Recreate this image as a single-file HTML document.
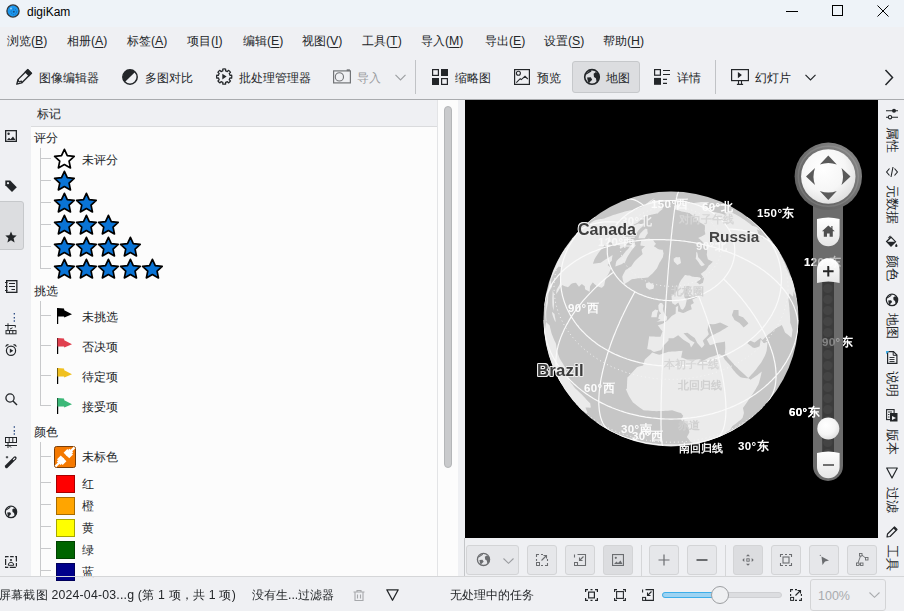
<!DOCTYPE html>
<html><head><meta charset="utf-8">
<style>
*{box-sizing:border-box;margin:0;padding:0}
html,body{width:904px;height:611px;overflow:hidden;background:#eff0f3;font-family:"Liberation Sans",sans-serif;font-size:12.3px;color:#232629}
.a{position:absolute;white-space:nowrap}
svg{position:absolute;overflow:visible}
.u{text-decoration:underline;text-underline-offset:2px;text-decoration-thickness:1px}
.mb{top:6px}
.tt{top:16px}
.btn{position:absolute;top:545px;height:30px;border:1px solid #d3d4d6;border-radius:3px;background:#e6e7ea}
.vt{position:absolute;left:885px;writing-mode:vertical-rl;text-orientation:sideways;font-size:12.5px;line-height:13px;color:#232629}
.sq{position:absolute;left:56px;width:19px;height:18px;border:1px solid rgba(0,0,0,.35)}
.br{position:absolute;left:41px;width:10px;height:1px;background:#c8c9cb}
.lbl{position:absolute;left:82px}
</style></head><body>
<svg style="left:0;top:0" width="0" height="0"><defs><symbol id="gi" viewBox="0 0 18 18"><circle cx="9" cy="8.9" r="7.3" fill="none" stroke="currentColor" stroke-width="1.6"/><path d="M1.9 6.2L7.8 2.1L8.4 3.4L3.4 6.6Z M4.1 9.6L7.8 9.2L9.2 11.7L6.9 13.9L5.8 15.8L4.6 12.2Z M10.6 5.8L12.9 4.1L15.2 5.3L16.6 8.8L15.8 12.6L13.7 14.2L12.9 10.2L11 8.9Z" fill="currentColor"/></symbol></defs></svg>
<!-- title bar -->
<div class="a" style="left:0;top:0;width:904px;height:27px;background:#eef3f8">
  <svg style="left:6px;top:4px" width="15" height="15" viewBox="0 0 15 15"><circle cx="7" cy="7" r="6.1" fill="#1c98ef" stroke="#33383d" stroke-width="1.3"/><circle cx="7.8" cy="7.8" r="2.8" fill="none" stroke="#1565b0" stroke-width="0.8" stroke-dasharray="1.2 0.8"/><circle cx="7.8" cy="7.8" r="1" fill="#1a4f88"/><circle cx="5" cy="4.6" r="1" fill="#8fd0ff"/></svg>
  <div class="a" style="left:27px;top:5px;font-size:12px;color:#000">digiKam</div>
  <svg style="left:786px;top:5px" width="12" height="12"><line x1="0" y1="6.5" x2="12" y2="6.5" stroke="#000" stroke-width="1"/></svg>
  <svg style="left:832px;top:5px" width="12" height="12"><rect x="0.5" y="0.5" width="10" height="10" fill="none" stroke="#000" stroke-width="1"/></svg>
  <svg style="left:877px;top:5px" width="12" height="12"><path d="M0.5 0.5L11.5 11.5M11.5 0.5L0.5 11.5" stroke="#000" stroke-width="1"/></svg>
</div>
<!-- menu -->
<div class="a" style="left:0;top:27px;width:904px;height:27px">
  <div class="a mb" style="left:7px">浏览(<span class="u">B</span>)</div>
  <div class="a mb" style="left:67px">相册(<span class="u">A</span>)</div>
  <div class="a mb" style="left:127px">标签(<span class="u">A</span>)</div>
  <div class="a mb" style="left:187px">项目(<span class="u">I</span>)</div>
  <div class="a mb" style="left:243px">编辑(<span class="u">E</span>)</div>
  <div class="a mb" style="left:302px">视图(<span class="u">V</span>)</div>
  <div class="a mb" style="left:362px">工具(<span class="u">T</span>)</div>
  <div class="a mb" style="left:421px">导入(<span class="u">M</span>)</div>
  <div class="a mb" style="left:485px">导出(<span class="u">E</span>)</div>
  <div class="a mb" style="left:544px">设置(<span class="u">S</span>)</div>
  <div class="a mb" style="left:603px">帮助(<span class="u">H</span>)</div>
</div>
<!-- toolbar -->
<div class="a" style="left:0;top:54px;width:904px;height:44px">
  <!-- pencil -->
  <svg style="left:15px;top:15px" width="18" height="17" viewBox="0 0 18 17"><g transform="translate(1.6 15.4) rotate(-45)"><path d="M0.3 0L4.6 -2.5H18.3V2.5H4.6Z" fill="none" stroke="#232629" stroke-width="1.4" stroke-linejoin="round"/><rect x="14.3" y="-3.2" width="4.7" height="6.4" fill="#232629"/><path d="M4.6 -2.5Q2.6 0 4.6 0.5Q6.8 1 4.6 2.5" fill="none" stroke="#232629" stroke-width="1.2"/></g></svg>
  <div class="a tt" style="left:39px">图像编辑器</div>
  <!-- half circle -->
  <svg style="left:122px;top:15px" width="17" height="17" viewBox="0 0 17 17"><circle cx="8" cy="8" r="7.2" fill="none" stroke="#232629" stroke-width="1.5"/><path d="M2.9 13.1A7.2 7.2 0 0 1 13.1 2.9Z" fill="#232629"/></svg>
  <div class="a tt" style="left:145px">多图对比</div>
  <!-- gear play -->
  <svg style="left:216px;top:14px" width="17" height="17" viewBox="0 0 17 17"><path d="M6.87 2.85L6.75 1.14A7.6 7.6 0 0 1 9.65 1.14L9.53 2.85A5.9 5.9 0 0 1 11.33 3.60L11.33 3.60L12.45 2.30A7.6 7.6 0 0 1 14.50 4.35L13.20 5.47A5.9 5.9 0 0 1 13.95 7.27L13.95 7.27L15.66 7.15A7.6 7.6 0 0 1 15.66 10.05L13.95 9.93A5.9 5.9 0 0 1 13.20 11.73L13.20 11.73L14.50 12.85A7.6 7.6 0 0 1 12.45 14.90L11.33 13.60A5.9 5.9 0 0 1 9.53 14.35L9.53 14.35L9.65 16.06A7.6 7.6 0 0 1 6.75 16.06L6.87 14.35A5.9 5.9 0 0 1 5.07 13.60L5.07 13.60L3.95 14.90A7.6 7.6 0 0 1 1.90 12.85L3.20 11.73A5.9 5.9 0 0 1 2.45 9.93L2.45 9.93L0.74 10.05A7.6 7.6 0 0 1 0.74 7.15L2.45 7.27A5.9 5.9 0 0 1 3.20 5.47L3.20 5.47L1.90 4.35A7.6 7.6 0 0 1 3.95 2.30L5.07 3.60A5.9 5.9 0 0 1 6.87 2.85Z" fill="none" stroke="#232629" stroke-width="1.25" stroke-linejoin="round"/><path d="M6.3 5.7L10.6 8.6L6.3 11.5Z" fill="#232629"/></svg>
  <div class="a tt" style="left:239px">批处理管理器</div>
  <!-- camera -->
  <svg style="left:333px;top:15px" width="18" height="15" viewBox="0 0 18 15"><rect x="0.6" y="1.9" width="16.8" height="12" fill="none" stroke="#727477" stroke-width="1.2"/><circle cx="6.4" cy="7.9" r="4.1" fill="none" stroke="#727477" stroke-width="1.1"/><rect x="13.7" y="0.3" width="3.2" height="1.8" fill="#727477"/></svg>
  <div class="a tt" style="left:357px;color:#9a9c9f">导入</div>
  <svg style="left:395px;top:20px" width="11" height="7"><path d="M0.5 0.8L5.5 5.8L10.5 0.8" fill="none" stroke="#9ea0a3" stroke-width="1.2"/></svg>
  <div class="a" style="left:415px;top:6px;width:1px;height:34px;background:#c1c3c6"></div>
  <!-- grid -->
  <svg style="left:432px;top:15px" width="16" height="16"><rect x="0.6" y="0.6" width="5.8" height="5.8" fill="none" stroke="#232629" stroke-width="1.2"/><rect x="9" y="0" width="7" height="7" fill="#232629"/><rect x="0" y="9" width="7" height="7" fill="#232629"/><rect x="9.6" y="9.6" width="5.8" height="5.8" fill="none" stroke="#232629" stroke-width="1.2"/></svg>
  <div class="a tt" style="left:455px">缩略图</div>
  <!-- preview -->
  <svg style="left:514px;top:15px" width="16" height="16"><rect x="0.6" y="0.6" width="14.8" height="14.8" fill="none" stroke="#232629" stroke-width="1.2"/><circle cx="4.4" cy="4.3" r="2" fill="none" stroke="#232629" stroke-width="1.1"/><path d="M2.3 13.6L6.2 9.7L7.3 10.6L11 7.3L13.8 10" fill="none" stroke="#232629" stroke-width="1.1"/></svg>
  <div class="a tt" style="left:537px">预览</div>
  <div class="a" style="left:572px;top:7px;width:68px;height:32px;background:#dcdde0;border:1px solid #c6c8cb;border-radius:3px"></div>
  <!-- globe -->
  <svg style="left:583px;top:14px;color:#232629" width="18" height="18"><use href="#gi"/></svg>
  <div class="a tt" style="left:606px">地图</div>
  <!-- details -->
  <svg style="left:654px;top:15px" width="17" height="17"><rect x="0.6" y="0.6" width="5.8" height="5.6" fill="none" stroke="#232629" stroke-width="1.2"/><rect x="0" y="8.9" width="7" height="6.9" fill="#232629"/><path d="M9 1.5H16M9 5.5H16M9 10.4H13M9 14.4H13" stroke="#232629" stroke-width="1.1"/></svg>
  <div class="a tt" style="left:677px">详情</div>
  <div class="a" style="left:715px;top:6px;width:1px;height:34px;background:#c1c3c6"></div>
  <!-- slideshow -->
  <svg style="left:731px;top:15px" width="18" height="16"><rect x="0.6" y="0.6" width="16.8" height="11" fill="none" stroke="#232629" stroke-width="1.2"/><path d="M6.9 3L10.9 6.1L6.9 9.2Z" fill="#232629"/><path d="M7.5 11.8V15M10.5 11.8V15M5.9 15.4H12.1" stroke="#232629" stroke-width="1.1"/></svg>
  <div class="a tt" style="left:755px">幻灯片</div>
  <svg style="left:805px;top:20px" width="11" height="7"><path d="M0.5 0.8L5.5 5.8L10.5 0.8" fill="none" stroke="#232629" stroke-width="1.2"/></svg>
  <svg style="left:884px;top:15px" width="10" height="17"><path d="M1.5 1L8.5 8.5L1.5 16" fill="none" stroke="#232629" stroke-width="1.5"/></svg>
</div>
<div class="a" style="left:0;top:99px;width:904px;height:1px;background:#a9abae"></div>

<!-- LEFT SIDEBAR -->
<div class="a" style="left:0;top:100px;width:31px;height:476px;background:#eff0f3">
</div>
<div id="lsb">
<div class="a" style="left:-3px;top:201px;width:27px;height:49px;background:#dcdde0;border:1px solid #c6c8cb;border-radius:3px"></div>
<svg style="left:5px;top:130px" width="12" height="12" viewBox="0 0 12 12"><rect x="0.65" y="0.65" width="10.7" height="10.7" fill="none" stroke="#232629" stroke-width="1.3"/><circle cx="3.6" cy="3.8" r="1.2" fill="#232629"/><path d="M2 10L4 7.8L5.5 9.2L8 6.5L10.5 10Z" fill="#232629"/></svg>
<svg style="left:5px;top:180px" width="12" height="12" viewBox="0 0 12 12"><path d="M0.3 0.6H5.2L11.8 7.2L7 12L0.3 5.3Z" fill="#232629"/><circle cx="3" cy="3.2" r="1.1" fill="#eff0f3"/></svg>
<svg style="left:5px;top:231px" width="12" height="12" viewBox="0 0 12 12"><path d="M6 0.5L7.6 4.3L11.7 4.6L8.6 7.3L9.6 11.4L6 9.2L2.4 11.4L3.4 7.3L0.3 4.6L4.4 4.3Z" fill="#232629"/></svg>
<svg style="left:5px;top:280px" width="13" height="13" viewBox="0 0 13 13"><rect x="1.65" y="0.65" width="10.2" height="11.7" fill="none" stroke="#232629" stroke-width="1.3"/><path d="M0 2.5H2.5M0 6.5H2.5M0 10.5H2.5" stroke="#232629" stroke-width="1.2"/><path d="M4 3.5H10M4 6.5H10M6.5 9.5H10" stroke="#232629" stroke-width="1.1"/></svg>
<svg style="left:0px;top:308px" width="20" height="30" viewBox="0 0 20 30"><path d="M14.3 5V6.6M14.3 9V10.6M14.3 12.2V13.8" stroke="#1c3f7a" stroke-width="1.2"/><path d="M5 17.5H15.5M8 15.3V22.3M15.3 17.5V19.5M10 21L12.5 19.8" stroke="#232629" stroke-width="1"/><rect x="6" y="22.6" width="10" height="3.2" fill="none" stroke="#232629" stroke-width="1"/><path d="M9.5 22.6V25.8M12.8 22.6V25.8" stroke="#232629" stroke-width="1"/></svg>
<svg style="left:5px;top:344px" width="13" height="12" viewBox="0 0 13 12"><circle cx="6" cy="6.8" r="4.6" fill="none" stroke="#232629" stroke-width="1.2"/><path d="M4.8 4.5L8.3 6.8L4.8 9.1Z" fill="#232629"/><path d="M0.6 2.6C1.2 1.2 2.3 0.6 3.5 0.6M11.4 2.6C10.8 1.2 9.7 0.6 8.5 0.6" fill="none" stroke="#232629" stroke-width="1.1"/></svg>
<svg style="left:5px;top:393px" width="13" height="13" viewBox="0 0 13 13"><circle cx="5" cy="5" r="4.1" fill="none" stroke="#232629" stroke-width="1.3"/><path d="M8 8L12 12" stroke="#232629" stroke-width="1.4"/></svg>
<svg style="left:0px;top:420px" width="20" height="30" viewBox="0 0 20 30"><path d="M14.3 6.2V7.8M14.3 10.1V11.7M14.3 13.2V14.8" stroke="#1c3f7a" stroke-width="1.2"/><rect x="5.5" y="17.5" width="11" height="5" fill="none" stroke="#232629" stroke-width="1"/><path d="M9.2 17.5V22.5M12.8 17.5V22.5M5 25.5H17M8 23V28M9 25.5L11 27.5" stroke="#232629" stroke-width="1"/></svg>
<svg style="left:5px;top:456px" width="13" height="12" viewBox="0 0 13 12"><path d="M1.5 10.5L10 2" stroke="#232629" stroke-width="3.2" stroke-linecap="round"/><path d="M8.2 3.8L10 2" stroke="#eff0f3" stroke-width="1.2"/><path d="M2 0V2.4M0.8 1.2H3.2" stroke="#232629" stroke-width="0.9"/></svg>
<svg style="left:4px;top:505px;color:#232629" width="14" height="14" viewBox="0 0 18 18"><use href="#gi" width="18" height="18"/></svg>
<svg style="left:5px;top:556px" width="12" height="12" viewBox="0 0 12 12"><rect x="0.6" y="0.6" width="10.8" height="10.8" fill="none" stroke="#232629" stroke-width="1.2" stroke-dasharray="3 1.5 3.6 1.5 3 0"/><circle cx="6" cy="4" r="1.1" fill="#232629"/><path d="M3.3 9.3C3.3 7.3 4.5 6.3 6 6.3C7.5 6.3 8.7 7.3 8.7 9.3Z" fill="none" stroke="#232629" stroke-width="1"/></svg>
</div>

<!-- LEFT PANEL -->
<div class="a" style="left:31px;top:100px;width:407px;height:27px;background:#eff0f3;border-bottom:1px solid #dadbdd"></div>
<div class="a" style="left:37px;top:106px">标记</div>
<div class="a" style="left:31px;top:127px;width:407px;height:449px;background:#fcfcfc"></div>
<div class="a" style="left:437px;top:100px;width:21px;height:476px;background:#fcfcfc;border-left:1px solid #e3e4e6"></div>
<div class="a" style="left:444px;top:106px;width:8px;height:362px;background:#c9cacc;border:1px solid #b4b6b8;border-radius:4px"></div>
<div class="a" style="left:458px;top:100px;width:7px;height:476px;background:#eff0f3"></div>
<div id="tree">
<svg style="left:0;top:0" width="1" height="1"><defs><path id="st" d="M-0.60 -10.70 L2.28 -4.36 L9.20 -3.58 L4.06 1.11 L5.45 7.93 L-0.60 4.50 L-6.65 7.93 L-5.26 1.11 L-10.40 -3.58 L-3.48 -4.36Z" stroke="#000" stroke-width="1.7" stroke-linejoin="round"/></defs></svg>
<div class="a" style="left:40px;top:148px;width:1px;height:121px;background:#c8c9cb"></div>
<div class="a" style="left:40px;top:301px;width:1px;height:105px;background:#c8c9cb"></div>
<div class="a" style="left:40px;top:442px;width:1px;height:134px;background:#c8c9cb"></div>
<div class="a" style="left:34px;top:130px">评分</div>
<div class="a" style="left:34px;top:283px">挑选</div>
<div class="a" style="left:34px;top:424px">颜色</div>
<div class="br" style="top:158px"></div>
<svg style="left:64.5px;top:159.9px" width="1" height="1"><use href="#st" fill="#fff"/></svg>
<div class="br" style="top:180px"></div>
<svg style="left:64.5px;top:181.9px" width="1" height="1"><use href="#st" fill="#0a74d6"/></svg>
<div class="br" style="top:202px"></div>
<svg style="left:64.5px;top:203.9px" width="1" height="1"><use href="#st" fill="#0a74d6"/></svg>
<svg style="left:86.5px;top:203.9px" width="1" height="1"><use href="#st" fill="#0a74d6"/></svg>
<div class="br" style="top:224px"></div>
<svg style="left:64.5px;top:225.9px" width="1" height="1"><use href="#st" fill="#0a74d6"/></svg>
<svg style="left:86.5px;top:225.9px" width="1" height="1"><use href="#st" fill="#0a74d6"/></svg>
<svg style="left:108.5px;top:225.9px" width="1" height="1"><use href="#st" fill="#0a74d6"/></svg>
<div class="br" style="top:246px"></div>
<svg style="left:64.5px;top:247.9px" width="1" height="1"><use href="#st" fill="#0a74d6"/></svg>
<svg style="left:86.5px;top:247.9px" width="1" height="1"><use href="#st" fill="#0a74d6"/></svg>
<svg style="left:108.5px;top:247.9px" width="1" height="1"><use href="#st" fill="#0a74d6"/></svg>
<svg style="left:130.5px;top:247.9px" width="1" height="1"><use href="#st" fill="#0a74d6"/></svg>
<div class="br" style="top:268px"></div>
<svg style="left:64.5px;top:269.9px" width="1" height="1"><use href="#st" fill="#0a74d6"/></svg>
<svg style="left:86.5px;top:269.9px" width="1" height="1"><use href="#st" fill="#0a74d6"/></svg>
<svg style="left:108.5px;top:269.9px" width="1" height="1"><use href="#st" fill="#0a74d6"/></svg>
<svg style="left:130.5px;top:269.9px" width="1" height="1"><use href="#st" fill="#0a74d6"/></svg>
<svg style="left:152.5px;top:269.9px" width="1" height="1"><use href="#st" fill="#0a74d6"/></svg>
<div class="lbl" style="top:152px">未评分</div>
<div class="br" style="top:315px"></div>
<svg style="left:56px;top:307px" width="17" height="17" viewBox="0 0 17 17"><path d="M1.6 1V17" stroke="#000" stroke-width="1.2"/><path d="M1.5 1L8 1.6L8.3 3.3L16 7.3L8.3 10.6L8 9.4L1.5 9.5Z" fill="#000"/></svg>
<div class="lbl" style="top:309px">未挑选</div>
<div class="br" style="top:345px"></div>
<svg style="left:56px;top:337px" width="17" height="17" viewBox="0 0 17 17"><path d="M1.6 1V17" stroke="#000" stroke-width="1.2"/><path d="M1.5 1L8 1.6L8.3 3.3L16 7.3L8.3 10.6L8 9.4L1.5 9.5Z" fill="#e0404f"/></svg>
<div class="lbl" style="top:339px">否决项</div>
<div class="br" style="top:375px"></div>
<svg style="left:56px;top:367px" width="17" height="17" viewBox="0 0 17 17"><path d="M1.6 1V17" stroke="#000" stroke-width="1.2"/><path d="M1.5 1L8 1.6L8.3 3.3L16 7.3L8.3 10.6L8 9.4L1.5 9.5Z" fill="#f0c020"/></svg>
<div class="lbl" style="top:369px">待定项</div>
<div class="br" style="top:405px"></div>
<svg style="left:56px;top:397px" width="17" height="17" viewBox="0 0 17 17"><path d="M1.6 1V17" stroke="#000" stroke-width="1.2"/><path d="M1.5 1L8 1.6L8.3 3.3L16 7.3L8.3 10.6L8 9.4L1.5 9.5Z" fill="#3cb878"/></svg>
<div class="lbl" style="top:399px">接受项</div>
<div class="br" style="top:456px"></div>
<svg style="left:54px;top:446px" width="22" height="22" viewBox="0 0 22 22"><rect x="0.5" y="0.5" width="21" height="21" rx="2" fill="#f57900" stroke="#7a3e08" stroke-width="1"/><g transform="translate(11 10.9) rotate(-45)" fill="#fff"><rect x="-13.5" y="-1.1" width="11.5" height="2.2"/><rect x="2" y="-1.1" width="11.5" height="2.2"/><rect x="-7.3" y="-4" width="5.3" height="8"/><rect x="2" y="-4" width="5.3" height="8"/><rect x="-9" y="-2.6" width="2" height="5.2"/><rect x="7" y="-2.6" width="2" height="5.2"/></g></svg>
<div class="lbl" style="top:449px">未标色</div>
<div class="br" style="top:482px"></div>
<div class="sq" style="top:474.5px;background:#ff0000"></div>
<div class="lbl" style="top:476px">红</div>
<div class="br" style="top:504px"></div>
<div class="sq" style="top:496.5px;background:#ffa500"></div>
<div class="lbl" style="top:498px">橙</div>
<div class="br" style="top:526px"></div>
<div class="sq" style="top:518.5px;background:#ffff00"></div>
<div class="lbl" style="top:520px">黄</div>
<div class="br" style="top:548px"></div>
<div class="sq" style="top:540.5px;background:#006400"></div>
<div class="lbl" style="top:542px">绿</div>
<div class="br" style="top:570px"></div>
<div class="sq" style="top:562.5px;background:#00008b"></div>
<div class="lbl" style="top:564px">蓝</div>
</div>

<!-- MAP -->
<div class="a" style="left:465px;top:100px;width:413px;height:438px;background:#000;overflow:hidden">
<div id="globe"><svg style="left:0;top:0" width="413" height="439"><defs><clipPath id="gc"><circle cx="206" cy="219" r="127.5"/></clipPath></defs><circle cx="206" cy="219" r="127.5" fill="#c6c6c6"/><g clip-path="url(#gc)"><path d="M192.3 97.2L191.2 97.7L190.1 98.2L189.0 98.6L188.0 99.1L187.0 99.7L186.1 100.2L185.1 100.8L184.3 101.4L183.4 102.0L182.7 102.7L181.9 103.3L181.2 104.0L180.6 104.7L179.7 105.2L178.9 105.7L178.1 106.2L177.3 106.7L176.5 107.3L175.4 107.6L174.3 107.9L173.3 108.3L172.2 108.6L171.1 109.0L170.0 109.4L169.0 109.8L167.4 110.0L165.8 110.3L164.2 110.6L162.5 110.9L160.9 111.3L159.2 111.7L157.6 112.2L155.9 112.7L154.2 113.2L152.5 113.8L150.3 114.4L148.1 115.1L145.9 115.9L143.7 116.7L141.5 117.6L139.2 118.6L137.9 118.7L136.7 118.9L135.4 119.1L134.2 119.3L133.0 119.6L131.8 119.8L130.7 120.1L129.6 120.5L127.7 121.6L125.9 122.7L124.1 123.9L122.4 125.2L120.6 126.5L118.9 127.8L117.0 129.5L115.2 131.3L113.4 133.1L111.6 134.9L109.9 136.8L108.3 138.5L106.7 140.3L105.1 142.2L103.6 144.0L102.1 146.0L100.6 147.9L99.2 149.9L97.9 152.0L96.6 154.1L95.4 156.2L94.2 158.4L93.1 160.6L92.0 162.7L91.0 164.8L90.1 167.0L89.2 169.2L88.3 171.3L87.4 173.6L86.6 175.8L85.9 178.0L85.4 179.9L84.9 181.8L84.4 183.8L84.0 185.7L83.6 187.6L83.2 189.8L82.8 192.0L82.4 194.2L82.1 196.4L81.8 198.7L81.3 201.7L80.8 204.8L80.5 207.9L80.2 210.9L80.2 212.9L80.3 214.9L80.4 216.9L80.6 218.9L80.8 220.9L81.5 221.2L81.3 218.8L81.2 216.4L81.2 214.0L81.2 211.6L81.6 209.4L82.0 207.2L82.5 205.0L83.0 202.8L83.0 200.8L83.1 198.9L83.2 196.9L83.4 195.0L83.6 193.0L84.2 191.7L84.9 190.4L85.6 189.1L86.3 187.9L87.1 186.6L87.2 185.0L87.3 183.4L86.6 183.8L86.0 184.2L86.0 182.9L86.1 181.5L86.2 180.2L86.4 178.9L87.3 176.8L88.2 174.8L89.2 172.9L90.2 170.9L91.0 169.8L91.9 168.6L92.8 167.5L93.7 166.4L94.5 166.7L95.3 167.0L96.2 167.2L96.1 168.6L96.0 170.0L95.9 171.4L95.8 172.8L95.8 174.2L95.7 175.7L95.6 177.2L95.6 178.7L95.6 180.2L95.1 182.4L94.6 184.5L93.6 186.3L92.6 188.0L91.6 189.8L91.3 192.1L91.0 194.3L91.9 193.0L92.9 191.7L93.9 190.0L94.9 188.3L96.0 186.7L97.0 185.0L98.1 185.5L99.3 186.0L100.5 186.4L101.7 186.8L103.0 187.2L104.3 185.9L105.6 184.6L106.9 183.4L108.9 183.1L111.0 182.8L111.7 183.8L112.4 184.8L113.2 185.7L114.0 186.7L115.4 185.3L116.9 184.0L117.8 184.8L118.8 185.5L119.8 186.3L119.9 187.8L120.1 189.3L121.2 189.9L122.3 190.6L123.5 191.2L124.7 191.7L124.8 189.9L124.9 188.0L125.1 186.2L126.4 184.3L127.6 182.4L128.5 183.1L129.3 183.9L130.2 184.7L131.1 185.4L132.0 186.2L133.2 186.6L134.4 187.0L135.7 187.4L136.9 187.8L139.2 185.5L139.5 183.7L139.9 181.9L140.3 180.1L140.8 178.3L142.4 175.7L144.0 173.1L144.7 171.4L145.5 169.7L146.3 168.1L145.5 167.5L144.8 166.9L144.1 166.3L143.4 165.7L142.7 165.0L144.7 162.8L146.8 160.7L146.9 159.7L147.0 158.8L147.1 157.8L147.3 156.8L147.4 155.9L147.6 154.9L145.3 156.4L143.0 158.0L141.1 159.1L139.3 160.3L137.5 161.5L135.7 162.7L133.7 163.0L131.8 163.3L129.9 163.5L128.0 163.7L128.4 162.3L128.9 160.9L129.4 159.6L130.2 158.1L131.1 156.6L132.0 155.2L132.9 153.8L133.8 152.4L134.9 151.0L135.9 149.7L137.1 148.4L138.2 147.1L139.3 145.8L140.5 144.6L142.8 143.2L145.0 141.9L146.0 142.5L147.0 143.0L148.1 143.5L149.2 144.0L150.3 144.5L151.9 144.9L153.5 145.2L155.2 145.5L155.2 146.2L155.2 146.9L155.2 147.6L155.2 148.3L155.3 149.0L157.3 147.7L159.3 146.4L161.4 145.3L161.1 144.7L160.9 144.2L160.8 143.6L160.6 143.0L160.4 142.4L161.3 141.7L162.3 140.9L163.2 140.2L164.1 139.6L165.1 138.9L163.9 138.4L162.9 138.0L161.8 137.4L160.8 136.9L159.8 136.3L160.0 135.7L160.2 135.1L160.4 134.5L160.7 133.8L161.0 133.2L161.3 132.6L161.6 132.0L161.9 131.4L162.2 130.8L162.5 130.2L162.9 129.6L163.3 129.0L163.6 128.4L164.0 127.8L164.4 127.3L165.2 126.8L166.0 126.3L166.8 125.8L167.6 125.4L168.3 124.9L169.1 124.5L169.9 124.1L170.7 123.7L171.5 123.3L172.4 123.0L172.8 122.5L173.3 122.1L173.8 121.6L174.4 121.2L174.9 120.8L175.4 120.3L175.8 119.8L176.3 119.4L176.8 119.0L177.3 118.5L177.9 118.1L178.4 117.7L178.9 117.3L179.5 116.9L180.1 116.5L180.8 116.2L181.6 115.9L182.3 115.7L183.1 115.5L183.9 115.3L184.6 115.1L185.4 114.9L186.2 114.7L186.9 114.5L187.7 114.4L188.4 114.2L189.1 114.0L189.9 113.9L190.6 113.7L191.4 113.6L192.1 113.5L192.8 113.4L193.3 112.8L193.8 112.3L194.3 111.8L194.9 111.2L195.5 110.7L196.1 110.2L196.8 109.7L197.4 109.2L198.1 108.8L197.1 108.3L196.1 107.9L195.0 107.6L193.9 107.2L194.7 107.0L195.6 106.7L196.4 106.5L197.3 106.3L198.2 106.1L197.1 105.8L196.1 105.5L195.0 105.3L193.9 105.1L192.7 104.9L193.5 104.2L194.3 103.6L195.1 103.0L194.7 102.1L194.3 101.1L193.9 100.2L192.7 100.4L191.6 100.6L190.4 100.8L189.3 101.0L188.2 101.2L187.1 101.5L186.0 101.8L186.7 101.0L187.4 100.2L188.3 99.5L189.1 98.8L190.2 98.2L191.2 97.7ZM150.3 166.4L150.5 165.3L150.7 164.2L150.9 163.1L151.2 162.0L151.5 161.0L153.4 159.0L155.5 157.2L157.6 155.4L158.4 154.3L159.2 153.2L160.1 152.2L160.9 151.1L161.8 150.2L162.8 149.2L163.4 148.4L164.1 147.6L164.7 146.8L165.4 146.1L166.1 145.3L166.8 144.6L167.6 143.9L168.3 143.3L169.1 142.6L169.8 142.0L169.9 142.5L169.9 143.0L170.0 143.4L170.1 143.9L170.2 144.4L170.3 144.9L170.5 145.3L170.6 145.8L169.9 146.5L169.3 147.2L168.6 147.9L168.0 148.7L167.4 149.4L166.8 150.2L166.2 151.1L165.6 151.9L165.0 152.8L164.4 153.7L163.8 154.7L163.2 155.6L162.7 156.6L162.1 157.6L161.6 158.6L161.2 159.7L160.7 160.8L160.3 161.8L158.4 163.0L156.6 164.2L154.5 165.0L152.4 165.7ZM176.3 140.3L176.2 140.7L176.1 141.2L176.0 141.6L175.9 142.0L175.8 142.4L175.7 142.9L175.6 143.3L175.6 143.7L175.5 144.2L175.5 144.6L175.4 145.0L175.4 145.5L176.4 145.7L177.4 145.8L178.3 146.0L179.3 146.1L180.3 146.2L181.3 146.2L182.0 146.3L182.8 146.5L183.5 146.6L184.3 146.6L185.0 146.7L185.7 146.7L186.5 146.8L187.2 146.8L188.0 146.8L188.7 146.7L189.0 146.3L189.2 146.0L189.5 145.6L189.8 145.2L190.1 144.8L190.4 144.5L190.7 144.2L191.0 143.8L190.8 143.7L190.7 143.5L190.5 143.3L190.3 143.1L190.1 142.9L189.9 142.7L189.8 142.5L189.6 142.3L189.5 142.1L189.3 141.9L189.2 141.7L189.0 141.5L188.9 141.3L188.8 141.1L188.6 140.8L188.5 140.6L188.4 140.4L188.3 140.1L187.6 139.9L186.8 139.7L186.1 139.5L185.5 139.2L184.8 138.9L184.1 138.6L182.2 138.9L180.2 139.3L178.3 139.8ZM174.0 123.6L173.0 123.8L172.1 124.1L171.2 124.5L170.3 124.8L169.3 125.2L168.4 125.6L167.5 126.0L167.0 126.5L166.6 127.0L166.2 127.6L165.8 128.1L165.5 128.7L165.1 129.2L164.8 129.8L164.4 130.4L164.1 130.9L163.8 131.5L163.5 132.1L163.2 132.7L162.9 133.3L162.7 133.8L162.4 134.4L162.2 135.0L162.0 135.6L164.0 135.6L166.0 135.6L168.0 135.6L170.1 135.6L170.3 135.1L170.6 134.6L170.9 134.2L171.1 133.7L171.4 133.2L171.7 132.8L172.1 132.3L172.4 131.8L172.7 131.4L173.0 131.0L173.4 130.5L173.7 130.1L174.1 129.7L174.5 129.2L174.9 128.8L175.3 128.4L175.7 128.0L176.2 127.7L176.6 127.3L177.0 126.9L177.5 126.5L177.9 126.2L178.4 125.8L178.9 125.5L177.2 124.8L175.6 124.2ZM180.6 128.6L180.2 128.9L179.7 129.2L179.3 129.6L178.9 129.9L178.5 130.2L178.1 130.6L177.7 130.9L177.4 131.3L177.0 131.7L176.6 132.0L176.3 132.4L175.9 132.8L175.6 133.2L175.2 133.6L174.9 134.0L174.7 134.5L174.5 134.9L174.4 135.3L174.2 135.8L174.1 136.2L173.9 136.6L173.8 137.1L173.7 137.5L173.6 138.0L173.5 138.4L175.6 138.3L177.7 138.3L179.9 138.3L180.0 137.9L180.2 137.6L180.3 137.2L180.5 136.9L180.7 136.5L180.9 136.2L181.1 135.8L181.3 135.5L181.5 135.2L181.7 134.9L181.9 134.5L182.1 134.2L182.4 133.9L182.6 133.6L182.9 133.3L182.8 132.9L182.7 132.5L182.6 132.1L182.5 131.7L182.5 131.3L182.4 130.9L182.4 130.5L182.4 130.1L182.4 129.7L182.4 129.3ZM180.1 146.2L179.4 146.8L178.7 147.5L177.9 148.2L177.3 148.9L176.6 149.6L176.6 150.0L176.7 150.5L176.8 150.9L176.9 151.4L177.0 151.8L177.1 152.3L177.2 152.7L177.4 153.2L177.5 153.6L177.7 154.1L175.7 155.7L173.9 157.3L172.0 159.0L170.2 160.8L168.8 162.6L167.5 164.5L166.2 166.4L164.3 167.6L162.4 168.9L160.6 170.1L159.4 172.2L158.3 174.3L157.3 176.5L157.4 177.6L157.6 178.7L157.8 179.9L158.1 181.0L158.4 182.1L158.7 183.2L159.0 184.4L161.0 183.1L162.9 181.9L164.9 180.6L166.8 179.3L168.1 179.1L169.3 178.9L170.6 178.7L171.8 178.5L173.0 178.2L174.0 178.2L175.1 178.2L176.1 178.1L177.1 178.1L178.1 178.0L179.1 177.9L180.1 177.8L181.0 177.7L182.0 177.6L183.0 177.4L184.5 176.1L186.0 174.8L187.5 173.4L189.0 171.8L190.5 170.1L192.0 168.3L192.8 166.4L193.7 164.5L194.6 162.6L195.7 160.9L196.8 159.1L197.9 157.3L198.1 156.0L198.3 154.7L198.6 153.4L198.5 153.1L198.4 152.7L198.3 152.3L198.2 152.0L198.1 151.6L198.0 151.2L197.9 150.9L197.9 150.5L197.9 150.2L197.8 149.8L197.5 149.8L197.2 149.8L196.9 149.8L196.6 149.8L196.4 149.7L196.1 149.7L195.8 149.7L195.5 149.6L195.2 149.6L194.9 149.5L194.5 149.4L194.2 149.4L193.9 149.3L193.6 149.2L193.3 149.1L193.1 149.0L192.9 148.9L192.6 148.7L192.4 148.6L192.2 148.4L191.9 148.3L191.7 148.1L191.5 148.0L191.2 147.8L191.0 147.6L190.8 147.5L190.6 147.3L190.4 147.1L190.2 146.9L190.0 146.7L189.5 146.7L189.0 146.6L188.5 146.6L188.0 146.5L187.4 146.4L186.9 146.3L186.4 146.2L185.9 146.0L184.8 146.1L183.6 146.2L182.4 146.2L181.3 146.2ZM180.8 183.6L180.9 185.4L181.1 187.2L181.8 187.9L182.6 188.5L183.4 189.1L184.2 189.7L185.3 189.5L186.4 189.2L187.5 188.9L188.6 188.5L189.1 185.3L188.2 184.5L187.4 183.7L186.5 183.4L185.7 183.2L184.9 183.0L184.0 182.7L183.2 182.4L182.0 183.0ZM81.3 221.9L81.9 222.7L82.5 223.4L83.2 224.1L83.9 224.8L84.7 225.4L85.1 227.4L85.6 229.4L86.1 231.5L86.6 233.5L87.3 235.2L88.0 237.0L88.7 238.7L89.4 240.4L90.2 242.1L91.0 243.8L91.5 247.3L92.0 250.7L92.8 253.2L93.7 255.7L94.6 258.2L95.6 260.0L96.7 261.8L97.8 263.6L98.9 265.4L100.1 267.1L100.7 269.8L101.5 272.4L102.2 275.0L103.5 278.2L104.9 281.3L106.2 283.2L107.7 285.0L109.1 286.9L110.6 288.7L112.1 290.1L113.6 291.6L115.2 293.0L116.8 294.4L118.4 296.3L120.1 298.1L121.8 299.9L123.5 301.7L125.3 303.4L125.4 304.9L125.7 306.3L125.9 307.6L124.5 307.7L123.1 307.6L121.7 307.6L120.5 307.5L120.8 308.5L121.2 309.6L121.6 310.5L122.1 311.5L122.5 312.4L122.3 312.8L122.0 313.1L121.8 313.4L121.7 313.6L120.5 312.8L119.3 311.9L118.2 311.0L117.1 310.1L116.4 309.6L115.7 309.0L115.1 308.4L115.4 308.8L115.8 309.1L116.2 309.5L115.8 309.1L115.4 308.8L115.1 308.4L114.8 308.1L114.0 307.3L113.3 306.5L112.5 305.7L111.8 304.9L111.1 304.2L112.3 305.5L113.6 306.8L114.8 308.1L113.9 307.2L113.1 306.3L112.3 305.5L111.5 304.6L110.7 303.7L110.7 303.7L110.7 303.7L110.7 303.7L111.7 304.8L112.7 305.9L113.8 307.1L114.9 308.2L115.3 308.6L115.8 309.1L116.3 309.6L116.8 310.1L117.6 310.9L118.5 311.7L117.7 310.9L116.8 310.1L116.0 309.3L115.2 308.5L114.4 307.7L113.7 306.9L112.5 305.7L111.4 304.5L110.3 303.3L109.3 302.1L108.3 300.9L107.3 299.7L106.4 298.6L105.5 297.4L104.6 296.3L103.8 295.2L102.8 293.9L101.9 292.6L101.0 291.3L100.1 290.0L99.2 288.7L98.6 287.7L98.0 286.8L97.4 285.9L96.9 285.0L96.4 284.1L95.8 283.2L95.4 282.4L94.7 281.2L94.1 280.2L93.5 279.1L93.0 278.0L92.4 276.9L91.8 275.8L91.3 274.7L90.8 273.6L90.3 272.6L89.8 271.5L89.0 269.7L88.3 268.0L87.6 266.2L86.7 263.9L85.8 261.5L85.0 259.1L84.2 256.7L83.5 254.3L82.9 252.1L82.3 250.0L81.8 247.8L81.3 245.6L80.9 243.4L80.5 241.2L80.0 238.7L79.7 236.2L79.4 233.7L79.2 232.8L79.2 231.8L79.1 230.9L79.1 230.0L79.2 229.1L79.4 228.3L79.7 228.3L80.2 228.2L80.4 226.8L80.6 225.4L80.8 224.0ZM182.2 249.1L182.5 247.0L182.9 244.9L183.2 242.7L183.5 240.6L183.9 238.4L184.2 236.3L185.8 236.4L187.5 236.5L189.1 236.6L190.7 236.7L192.3 236.7L193.9 236.7L195.5 236.7L196.5 234.0L197.5 231.3L195.9 229.4L194.3 227.3L192.8 225.3L194.6 224.8L196.3 224.2L198.1 223.6L199.6 222.6L201.0 221.6L202.5 220.5L203.9 219.1L205.3 217.6L206.7 216.1L208.0 215.3L209.3 214.6L210.6 213.8L210.7 211.5L210.8 209.3L210.8 207.1L212.0 206.5L213.2 205.8L213.1 208.6L213.0 211.4L214.3 211.8L215.7 212.3L217.0 212.7L218.4 213.1L219.6 212.5L220.8 211.9L222.0 211.3L223.2 210.7L224.4 210.3L225.6 209.8L226.8 209.3L226.2 207.1L225.7 205.0L226.8 204.3L227.8 203.7L228.9 203.0L227.2 199.4L228.4 198.9L229.5 198.5L230.7 198.0L231.8 197.5L232.6 196.6L233.4 195.7L232.4 195.9L231.3 196.0L230.2 196.2L229.1 196.3L228.0 196.4L226.7 196.4L225.4 196.3L224.1 196.3L223.3 194.2L222.4 192.1L223.0 190.6L223.6 189.0L224.1 187.5L224.5 186.0L223.6 186.0L222.6 186.0L221.7 186.0L221.2 187.7L220.7 189.4L220.1 191.1L219.5 192.8L219.5 195.0L219.4 197.2L221.7 200.2L221.1 203.1L220.4 206.0L219.2 207.9L217.9 209.8L215.9 208.9L215.1 206.8L214.2 204.6L213.4 202.5L212.4 203.3L211.3 204.1L210.1 204.9L208.6 204.1L207.2 203.2L206.9 200.9L206.7 198.5L206.5 196.2L207.5 195.3L208.5 194.4L209.5 193.5L210.4 192.6L211.4 191.6L212.1 189.7L212.8 187.7L213.5 185.7L214.1 183.8L214.7 182.6L215.3 181.4L215.9 180.2L216.5 179.5L217.1 178.8L217.7 178.0L218.3 177.3L218.8 176.5L219.4 175.8L219.9 175.0L220.7 175.1L221.5 175.3L222.3 175.4L223.1 175.5L223.9 175.6L224.8 175.6L225.8 176.0L226.8 176.4L227.8 176.7L228.7 176.8L229.6 176.9L230.6 177.0L231.5 177.1L232.4 177.1L233.4 177.2L234.3 177.2L236.2 178.6L235.6 179.1L235.0 179.7L234.3 180.2L233.6 180.7L232.9 181.2L232.2 181.7L231.5 182.2L233.1 183.3L234.7 184.4L235.5 184.0L236.3 183.6L237.1 183.2L237.9 182.7L238.2 181.6L238.5 180.5L238.8 179.3L239.0 178.2L237.4 176.0L235.7 173.8L236.3 173.4L237.0 172.9L237.6 172.5L238.2 172.1L238.8 171.6L239.3 171.2L239.9 170.7L240.5 170.3L241.0 169.8L241.4 169.2L241.8 168.6L242.2 168.0L242.6 167.4L243.0 166.8L243.3 166.2L243.7 165.5L244.2 165.1L244.8 164.7L245.3 164.2L245.8 163.8L246.3 163.3L246.8 162.8L247.3 162.3L247.8 161.8L245.3 160.6L242.8 159.3L242.7 158.5L242.5 157.7L242.3 156.9L242.1 156.2L241.9 155.4L241.7 154.7L241.8 154.1L241.9 153.5L241.9 153.0L242.0 152.4L242.0 151.9L242.1 151.3L242.1 150.8L242.0 150.1L241.8 149.5L241.6 148.9L241.5 148.4L241.3 147.8L241.1 147.2L240.8 146.6L240.5 146.1L240.2 145.5L239.8 144.9L239.4 144.4L239.1 143.8L238.7 143.3L238.3 142.8L237.8 142.3L237.4 141.8L237.0 141.3L236.5 140.8L236.1 140.4L235.6 139.9L235.1 139.5L234.7 139.1L234.2 138.7L233.6 138.3L233.1 137.9L234.1 137.5L235.1 137.1L236.0 136.7L236.9 136.2L237.8 135.8L238.7 135.3L239.5 134.7L240.3 134.2L240.3 133.7L240.2 133.3L240.1 132.8L240.0 132.3L239.9 131.8L239.8 131.3L239.6 130.8L239.7 130.3L239.8 129.8L239.9 129.2L239.9 128.7L239.9 128.2L240.0 127.6L239.9 127.0L239.9 126.5L239.9 125.9L239.8 125.4L239.2 125.0L238.6 124.6L238.0 124.2L237.4 123.8L236.8 123.4L236.1 123.1L235.5 122.7L234.9 122.4L234.3 122.1L233.6 121.8L233.3 121.3L232.9 120.9L232.5 120.4L232.1 120.0L231.7 119.6L231.3 119.1L230.9 118.7L230.4 118.3L230.0 117.9L229.5 117.4L229.1 117.0L228.6 116.5L228.2 116.1L227.7 115.6L227.2 115.2L226.7 114.8L226.2 114.3L225.6 113.9L225.1 113.5L224.5 113.1L223.8 112.9L223.0 112.7L222.3 112.5L221.5 112.4L220.7 112.2L220.0 112.1L219.2 111.9L218.4 111.8L217.7 111.7L216.9 111.6L216.2 111.4L215.5 111.1L214.8 110.9L214.1 110.6L213.4 110.4L212.6 110.2L211.9 110.0L211.1 109.8L210.4 109.6L209.6 109.5L209.7 108.4L209.9 107.3L210.1 106.2L210.2 105.2L211.3 104.7L212.4 104.2L213.5 103.7L214.7 103.3L215.9 102.9L217.0 102.9L218.1 102.9L219.2 102.9L220.3 102.9L221.5 102.9L222.6 103.0L223.8 103.1L224.9 103.2L226.1 103.3L227.3 103.4L229.0 103.0L230.8 102.7L232.6 102.4L234.4 102.2L236.3 102.0L238.3 102.0L240.2 102.0L242.2 102.1L244.3 102.3L243.6 102.7L242.9 103.1L242.3 103.6L241.5 104.1L240.8 104.7L240.0 105.2L239.3 105.8L240.1 106.4L241.0 106.9L241.8 107.5L242.7 108.1L243.5 108.7L244.2 109.3L245.0 109.9L245.7 110.5L246.5 111.1L247.2 111.7L248.9 112.0L250.6 112.3L252.4 112.7L254.1 113.1L255.9 113.6L257.7 114.1L259.5 114.7L261.3 115.3L261.0 114.5L260.7 113.7L260.4 112.9L260.0 112.0L261.4 112.1L262.8 112.1L264.2 112.2L265.6 112.4L266.9 112.5L268.7 113.4L270.4 114.3L272.1 115.3L273.9 116.3L275.6 117.3L277.3 118.4L279.0 119.6L280.7 120.7L282.4 122.0L284.1 123.2L285.8 124.5L287.4 125.9L288.4 126.1L289.4 126.4L290.3 126.6L291.2 126.9L292.1 127.3L293.1 128.4L294.1 129.6L295.1 130.8L293.9 130.3L292.8 129.7L291.7 129.2L292.1 130.1L292.5 131.1L292.8 132.1L293.1 133.0L293.4 134.0L295.0 135.6L296.6 137.2L298.1 138.9L297.7 137.8L297.3 136.7L296.8 135.6L296.3 134.5L298.0 136.0L299.7 137.5L301.4 139.1L302.1 139.2L302.8 139.3L303.4 139.4L303.9 139.5L305.3 140.8L306.6 142.2L307.8 143.6L309.1 145.1L310.3 146.6L311.7 148.6L313.1 150.7L314.4 152.9L315.4 154.7L316.4 156.5L317.3 158.3L318.2 160.1L319.1 162.0L319.9 163.8L320.7 165.7L321.0 167.0L321.4 168.3L322.6 170.7L323.7 173.1L324.8 175.6L325.3 176.0L325.7 176.4L326.0 176.8L326.3 177.2L326.5 177.6L326.7 178.1L327.6 180.7L328.4 183.3L329.1 186.0L329.8 188.6L329.8 189.0L329.8 189.4L329.6 189.8L329.4 190.2L330.1 192.6L330.6 195.1L331.2 197.5L331.4 197.9L331.7 198.2L331.8 198.6L331.9 199.0L332.0 199.3L332.0 199.7L332.1 200.0L332.1 200.4L332.3 201.7L332.5 202.9L332.6 204.2L332.6 203.8L332.5 203.3L332.4 202.9L332.3 202.4L332.0 202.0L331.7 200.6L331.3 199.3L330.9 197.9L330.5 196.6L330.0 195.3L329.5 194.0L328.9 192.6L328.3 191.3L328.3 192.7L328.2 194.0L328.1 195.4L327.9 196.7L327.2 196.1L326.5 195.4L325.8 194.8L325.0 194.1L324.1 193.4L324.0 195.1L323.9 196.7L323.7 198.3L323.5 199.9L323.8 202.5L324.1 205.2L324.4 207.8L324.5 210.5L324.8 213.6L325.0 216.6L325.2 219.7L325.2 222.7L325.8 224.2L326.3 225.6L326.7 227.1L327.2 228.5L327.6 230.0L327.2 232.6L326.9 235.2L326.4 237.8L325.8 237.2L325.1 236.5L324.3 235.9L323.6 235.2L322.7 234.6L321.9 233.9L321.0 233.2L320.0 232.5L319.4 231.0L318.8 229.5L318.2 227.9L317.5 226.4L316.7 224.9L315.6 225.7L314.4 226.4L313.2 227.1L311.9 227.8L310.6 228.4L309.5 229.5L308.4 230.5L307.2 231.5L306.0 232.4L304.7 233.4L303.5 234.3L302.3 235.5L301.1 236.6L299.8 237.8L298.6 238.9L297.3 240.0L295.5 238.0L294.0 239.2L292.5 240.3L291.0 241.4L289.4 242.5L287.1 241.4L284.8 240.2L283.6 241.7L282.4 243.3L284.2 244.7L286.0 246.1L287.7 247.4L289.8 248.0L291.4 247.5L293.0 246.9L294.6 246.2L295.2 242.8L295.7 239.3L297.3 241.3L298.8 243.4L300.6 242.6L302.5 241.8L302.3 244.8L302.0 247.8L301.6 250.9L300.8 253.4L299.8 255.9L298.7 258.0L297.6 260.1L296.4 262.2L295.1 264.0L293.7 265.8L292.4 267.6L291.0 269.4L289.5 271.2L288.0 272.9L286.5 274.6L285.0 276.3L283.4 278.0L282.1 276.9L280.8 275.7L279.5 274.5L278.1 273.3L276.7 272.1L275.3 270.8L273.9 269.5L272.6 268.1L271.2 266.8L269.9 265.4L268.6 264.0L267.2 262.5L265.9 261.0L264.5 259.5L263.1 258.0L262.0 256.4L260.9 254.7L259.8 252.9L260.1 250.6L260.3 248.3L260.2 246.0L260.1 243.8L259.9 241.6L258.2 241.9L256.5 242.2L254.8 242.5L253.1 242.7L251.4 243.0L249.8 243.6L248.2 244.2L246.6 244.7L245.0 245.3L243.9 243.4L242.9 241.5L241.8 239.5L243.2 238.3L244.6 237.1L245.9 235.9L247.4 235.2L248.9 234.6L250.3 233.9L251.8 233.1L253.2 232.4L254.6 231.7L256.0 230.9L257.4 230.1L258.8 229.3L260.1 228.5L261.5 227.6L263.5 226.5L261.4 225.5L259.3 224.6L257.2 223.5L255.1 222.5L253.5 223.0L251.9 223.4L250.3 223.9L248.6 224.3L247.0 224.2L245.4 224.0L243.8 223.8L243.2 227.0L242.6 230.1L243.2 232.2L243.8 234.3L242.4 235.9L240.9 237.5L239.4 239.1L237.8 240.7L238.7 242.7L239.5 244.7L238.1 246.4L236.7 248.1L234.5 245.6L232.3 243.1L231.0 240.6L229.7 238.1L227.9 236.8L226.0 235.5L224.2 234.1L222.4 232.7L220.5 233.0L218.5 233.2L220.7 235.5L222.8 237.8L225.0 240.1L227.3 241.3L229.6 242.6L227.9 245.1L226.0 247.6L225.3 245.5L224.6 243.4L222.5 242.3L220.4 241.1L218.4 239.8L216.6 238.3L214.9 236.8L213.2 235.2L211.6 236.2L210.0 237.3L208.4 238.3L206.8 238.3L205.2 238.3L203.6 238.3L203.5 240.5L201.8 242.2L200.1 244.0L198.3 245.7L197.3 247.8L196.3 249.9L194.5 250.5L192.7 251.0L190.9 251.5L189.0 252.0L187.3 250.9L185.7 249.7L184.0 249.5ZM191.5 221.8L193.0 221.6L194.5 221.5L195.9 221.3L197.4 221.2L198.9 220.9L200.3 220.7L201.8 220.5L202.2 216.7L200.0 214.8L198.4 211.3L197.9 209.1L198.5 205.6L197.3 203.2L196.2 203.1L195.0 203.0L193.3 205.2L193.5 208.6L194.1 211.3L196.2 213.4L194.1 214.7L193.7 217.6L192.7 218.1L194.1 218.9L195.6 219.6L193.5 220.7ZM186.2 217.2L187.6 217.3L188.9 217.3L190.3 217.3L191.7 217.3L192.0 215.1L192.3 212.9L193.4 210.3L191.8 210.0L190.3 209.6L188.8 210.8L187.2 212.0L186.7 214.6ZM208.9 161.4L209.4 162.0L210.0 162.6L210.6 163.2L211.2 163.8L211.8 164.4L212.4 165.0L212.9 164.8L213.4 164.5L213.8 164.3L214.3 164.1L214.7 163.8L215.2 163.6L215.6 163.3L216.0 163.1L215.7 161.1L215.3 159.1L214.8 157.1L214.4 157.1L214.0 157.2L213.6 157.2L213.2 157.2L212.9 157.2L212.5 157.2L212.1 157.2L211.7 157.2L211.3 157.1L210.9 157.1L210.6 157.4L210.3 157.6L210.0 157.9L209.6 158.1L209.3 158.4L208.9 158.6L208.6 158.8ZM236.6 166.3L237.2 166.0L237.9 165.7L238.5 165.5L239.1 165.2L239.8 164.8L238.2 162.9L236.6 161.0L234.9 159.1L233.2 157.3L233.1 156.7L233.0 156.0L232.9 155.4L232.8 154.7L232.6 154.1L232.5 153.5L232.3 152.9L232.1 152.3L231.9 151.7L231.7 152.0L231.4 152.4L231.2 152.7L231.2 153.2L231.2 153.7L231.2 154.3L231.2 154.8L231.1 155.3L231.1 155.8L231.0 156.3L231.0 156.8L230.9 157.4L230.8 157.9L230.6 158.4L232.2 160.5L233.7 162.6L235.0 164.7ZM162.4 277.6L162.3 279.5L162.1 281.4L162.1 283.3L162.0 285.1L161.9 287.0L161.9 288.8L160.8 289.0L161.9 291.5L163.0 294.0L164.2 296.5L165.5 298.5L166.7 300.5L168.0 302.5L170.1 304.1L172.2 305.7L174.2 307.2L176.4 308.7L178.5 310.2L180.7 310.4L182.8 310.6L185.0 310.8L187.2 310.9L189.4 311.1L191.6 311.2L193.8 311.1L196.0 311.0L198.3 310.9L200.5 310.8L202.7 310.7L204.9 310.5L207.1 310.2L209.3 311.0L211.5 311.7L213.8 312.4L216.0 313.0L217.1 314.4L218.2 315.8L217.5 317.3L216.7 318.7L216.0 320.1L217.7 321.3L219.3 322.5L220.9 323.6L222.6 324.7L222.9 325.9L223.1 327.0L223.4 328.1L223.7 329.2L223.9 330.2L224.2 331.3L224.4 332.2L223.9 333.2L223.4 334.2L222.9 335.2L222.4 336.1L221.9 337.0L222.5 337.7L223.0 338.4L223.5 339.0L224.0 339.7L224.5 340.2L225.0 340.8L225.4 341.3L225.9 341.7L226.3 342.2L226.7 342.5L227.5 342.8L228.2 343.1L229.0 343.3L229.7 343.4L230.3 343.6L231.0 343.6L232.5 343.5L233.9 343.3L235.7 342.9L237.5 342.4L239.3 342.0L241.1 341.5L242.9 340.9L244.7 340.4L246.8 339.6L249.0 338.8L251.1 337.9L253.2 337.0L255.4 336.0L257.5 334.9L259.0 334.0L260.6 333.1L262.1 332.1L263.6 331.0L265.1 329.9L265.6 329.2L266.0 328.5L266.4 327.8L266.8 327.0L267.2 326.2L269.3 324.7L271.4 323.2L273.4 321.5L275.5 319.9L277.5 318.1L277.8 317.2L278.1 316.1L278.4 315.1L278.7 314.0L278.9 312.9L278.8 312.0L278.6 311.1L278.4 310.1L278.2 309.1L277.9 308.0L279.4 306.0L280.8 304.0L282.2 301.9L283.6 299.7L285.4 297.3L287.1 294.8L288.8 292.3L290.4 289.7L291.9 287.1L293.4 284.4L294.1 282.3L294.7 280.2L295.3 278.1L295.8 275.9L296.3 273.7L296.8 271.5L295.3 272.8L293.7 274.0L292.2 275.2L290.6 276.3L288.9 277.5L287.3 278.6L285.6 279.7L283.5 278.3L281.6 278.2L279.6 277.9L277.6 277.7L275.6 277.3L274.0 276.0L272.4 274.5L270.8 273.1L269.7 271.6L268.5 270.2L267.4 268.7L266.3 267.2L265.1 265.6L263.8 264.1L262.4 262.6L261.1 261.1L259.7 259.5L258.8 257.8L257.8 256.0L254.5 254.1L252.8 254.7L251.1 255.3L249.3 255.9L247.6 256.5L245.8 257.1L244.1 257.6L242.4 258.5L240.6 259.4L238.9 260.3L237.1 261.1L235.4 262.0L234.9 258.9L233.1 259.3L231.2 259.6L229.4 260.0L227.6 260.3L225.7 260.6L223.8 260.0L221.8 259.4L219.9 258.7L218.0 258.1L216.1 257.4L216.6 255.2L217.1 253.0L217.5 250.8L215.8 251.0L214.0 251.1L212.2 251.2L210.4 251.4L208.7 251.5L206.9 251.6L205.1 251.7L203.3 251.8L201.5 252.4L199.7 253.0L197.9 253.6L196.1 254.2L194.2 254.7L192.4 254.2L190.7 253.7L188.9 253.1L187.2 252.6L184.8 254.9L182.3 257.2L179.8 259.5L179.3 261.5L178.7 263.4L178.1 265.4L176.1 266.0L174.0 266.6L172.0 267.2L170.4 269.0L168.8 270.8L167.2 272.5L165.6 274.3L164.0 275.9ZM87.8 190.2L88.1 191.4L88.5 192.6L88.9 193.7L88.8 195.6L88.8 197.5L88.9 199.4L89.0 201.2L89.1 203.1L88.9 205.6L88.7 208.2L88.6 210.7L88.2 209.1L87.8 207.5L87.5 205.9L87.4 203.9L87.3 201.9L87.3 200.0L87.3 198.0L87.4 196.1L87.5 194.1L87.6 192.2ZM87.3 212.0L88.4 213.0L89.5 213.9L89.8 216.3L90.3 218.6L90.7 220.9L90.2 222.0L89.5 220.3L88.8 218.5L88.1 216.8L87.5 214.8L87.0 212.7Z" fill="#ebebeb"/><path d="M266.9 215.3L267.5 213.5L268.1 211.7L268.6 210.0L270.2 210.0L271.9 210.0L273.5 210.0L273.6 212.7L273.6 215.5L275.9 216.4L278.1 217.2L279.4 218.7L280.8 220.3L282.1 221.8L283.4 223.3L282.3 224.4L281.1 225.4L279.9 226.5L278.6 227.5L277.3 225.9L275.9 224.4L274.5 222.9L272.0 221.5L269.5 220.0L268.2 217.6Z" fill="#c6c6c6"/><path d="M213.8 91.7L213.7 91.8L213.5 91.9L213.4 92.0L213.3 92.2L213.2 92.4L213.1 92.6L212.9 92.9L212.8 93.2L212.7 93.5L212.6 93.9L212.4 94.3L212.3 94.8L212.2 95.3L212.0 95.9L211.9 96.4L211.7 97.1L211.6 97.7L211.4 98.4L211.3 99.1L211.2 99.9L211.0 100.7L210.8 101.5L210.7 102.4L210.5 103.3L210.4 104.2L210.2 105.2L210.1 106.2L209.9 107.3L209.7 108.4L209.6 109.5L209.4 110.6L209.3 111.8L209.1 113.0L208.9 114.3L208.8 115.5L208.6 116.9L208.4 118.2L208.3 119.6L208.1 121.0L207.9 122.4L207.7 123.9L207.6 125.3L207.4 126.9L207.2 128.4L207.0 130.0L206.9 131.6L206.7 133.2L206.5 134.9L206.3 136.5L206.2 138.2L206.0 140.0M161.6 99.5L162.2 99.3L162.7 99.2L163.3 99.1L164.0 99.0L164.6 99.0L165.2 99.0L165.9 99.1L166.5 99.1L167.2 99.3L167.9 99.4L168.6 99.6L169.3 99.8L170.0 100.1L170.7 100.4L171.5 100.8L172.2 101.1L173.0 101.5L173.7 102.0L174.5 102.5L175.3 103.0L176.1 103.5L176.9 104.1L177.7 104.8L178.6 105.4M110.8 134.2L111.6 133.4L112.4 132.6L113.2 131.9L114.1 131.1L115.0 130.4L115.9 129.7L116.9 129.1L117.9 128.4L118.9 127.8L119.9 127.3L121.0 126.7L122.1 126.2L123.2 125.7L124.3 125.2L125.5 124.8L126.7 124.4L127.9 124.0L129.2 123.7L130.4 123.3L131.7 123.0L133.0 122.8L134.3 122.6L135.7 122.4L137.1 122.2L138.5 122.0L139.9 121.9L141.3 121.8L142.8 121.8L144.2 121.8L145.7 121.8L147.2 121.8L148.8 121.9L150.3 122.0L151.9 122.1L153.5 122.2M79.2 205.7L79.4 204.3L79.6 202.9L79.8 201.6L80.1 200.2L80.5 198.9L80.8 197.5L81.2 196.2L81.7 194.9L82.2 193.6L82.7 192.3L83.2 191.0L83.8 189.7L84.4 188.4L85.1 187.1L85.8 185.9L86.6 184.6L87.3 183.4L88.1 182.1L89.0 180.9L89.9 179.7L90.8 178.5L91.8 177.3L92.7 176.1L93.8 175.0L94.8 173.8L95.9 172.7L97.0 171.6L98.2 170.5L99.4 169.4L100.6 168.3L101.9 167.2L103.2 166.2L104.5 165.2L105.8 164.2L107.2 163.2L108.6 162.2L110.1 161.2L111.5 160.3L113.0 159.4L114.6 158.5L116.1 157.6L117.7 156.7L119.3 155.9L120.9 155.0L122.6 154.2L124.3 153.4L126.0 152.6L127.7 151.9L129.5 151.2L131.3 150.5L133.1 149.8L134.9 149.1L136.8 148.5L138.6 147.8L140.5 147.2L142.4 146.6L144.4 146.1L146.3 145.5L148.3 145.0L150.3 144.5L152.3 144.1L154.3 143.6L156.3 143.2L158.4 142.8L160.4 142.4L162.5 142.1L164.6 141.7L166.7 141.4L168.8 141.1L171.0 140.9L173.1 140.6L175.3 140.4L177.4 140.2L179.6 140.1L181.7 139.9L183.9 139.8L186.1 139.7L188.3 139.7L190.5 139.6L192.7 139.6L194.9 139.6L197.1 139.6L199.3 139.7L201.6 139.8L203.8 139.9L206.0 140.0M96.6 284.4L95.9 283.3L95.4 282.2L94.8 281.1L94.3 279.9L93.9 278.7L93.4 277.6L93.0 276.4L92.7 275.1L92.3 273.9L92.0 272.7L91.8 271.4L91.6 270.1L91.4 268.8L91.2 267.5L91.1 266.2L91.0 264.8L90.9 263.4L90.9 262.1L90.9 260.7L91.0 259.3L91.1 257.9L91.2 256.5L91.4 255.0L91.6 253.6L91.8 252.1L92.0 250.7L92.3 249.2L92.7 247.7L93.0 246.2L93.4 244.7L93.9 243.2L94.3 241.7L94.8 240.2L95.4 238.6L95.9 237.1L96.6 235.5L97.2 234.0L97.9 232.5L98.6 230.9L99.3 229.3L100.1 227.8L100.9 226.2L101.7 224.6L102.6 223.1L103.5 221.5L104.4 219.9L105.3 218.4L106.3 216.8L107.4 215.2L108.4 213.7L109.5 212.1L110.6 210.5L111.7 209.0L112.9 207.4L114.1 205.8L115.3 204.3L116.6 202.7L117.8 201.2L119.1 199.7L120.5 198.1L121.8 196.6L123.2 195.1L124.6 193.6L126.1 192.1L127.5 190.6L129.0 189.1L130.5 187.6L132.0 186.2L133.6 184.7L135.1 183.3L136.7 181.8L138.4 180.4L140.0 179.0L141.6 177.6L143.3 176.2L145.0 174.8L146.7 173.5L148.5 172.1M145.4 331.2L144.8 330.8L144.1 330.4L143.5 329.9L142.8 329.4L142.2 328.9L141.7 328.3L141.1 327.8L140.5 327.1L140.0 326.5L139.5 325.8L139.0 325.1L138.6 324.3L138.1 323.5L137.7 322.7L137.3 321.8L136.9 321.0L136.6 320.0L136.2 319.1L135.9 318.1L135.6 317.1L135.4 316.1L135.1 315.0L134.9 313.9L134.7 312.8L134.5 311.7L134.3 310.5L134.2 309.3L134.1 308.0L134.0 306.8L133.9 305.5L133.8 304.2L133.8 302.8L133.8 301.5L133.8 300.1L133.8 298.7L133.9 297.2L134.0 295.7L134.1 294.3L134.2 292.7L134.3 291.2L134.5 289.7L134.7 288.1L134.9 286.5L135.1 284.9L135.4 283.2L135.6 281.6L135.9 279.9L136.2 278.2L136.6 276.5L136.9 274.8L137.3 273.0L137.7 271.2L138.1 269.5L138.6 267.7L139.0 265.9L139.5 264.0L140.0 262.2L140.5 260.3L141.1 258.5L141.7 256.6L142.2 254.7L142.8 252.8L143.5 250.9L144.1 249.0L144.8 247.1L145.4 245.1L146.1 243.2L146.8 241.2L147.6 239.3L148.3 237.3L149.1 235.3L149.9 233.4L150.7 231.4L151.5 229.4L152.3 227.4L153.2 225.4L154.1 223.4L154.9 221.4L155.8 219.4L156.7 217.4L157.7 215.5L158.6 213.5L159.6 211.5L160.6 209.5L161.5 207.5L162.5 205.5L163.6 203.5L164.6 201.6L165.6 199.6L166.7 197.6L167.7 195.7L168.8 193.7L169.9 191.8M198.1 346.3L198.0 346.2L197.9 346.1L197.8 346.0L197.7 345.9L197.6 345.7L197.5 345.5L197.4 345.2L197.3 344.9L197.3 344.6L197.2 344.2L197.1 343.8L197.0 343.3L196.9 342.8L196.9 342.3L196.8 341.7L196.7 341.1L196.7 340.4L196.6 339.8L196.5 339.0L196.5 338.3L196.4 337.5L196.4 336.7L196.3 335.8L196.3 334.9L196.3 334.0L196.2 333.0L196.2 332.0L196.1 331.0L196.1 329.9L196.1 328.8L196.1 327.6L196.1 326.5L196.0 325.3L196.0 324.0L196.0 322.7L196.0 321.4L196.0 320.1L196.0 318.8L196.0 317.4L196.0 315.9L196.0 314.5L196.0 313.0L196.0 311.5L196.1 309.9L196.1 308.4L196.1 306.8L196.1 305.2L196.1 303.5L196.2 301.8L196.2 300.1L196.3 298.4L196.3 296.7L196.3 294.9L196.4 293.1L196.4 291.3L196.5 289.4L196.5 287.6L196.6 285.7L196.7 283.8L196.7 281.9L196.8 279.9L196.9 278.0L196.9 276.0L197.0 274.0L197.1 272.0L197.2 270.0L197.3 267.9L197.3 265.9L197.4 263.8L197.5 261.7L197.6 259.6L197.7 257.5L197.8 255.4L197.9 253.3L198.0 251.1L198.1 249.0L198.2 246.8L198.3 244.6L198.5 242.4L198.6 240.3L198.7 238.1L198.8 235.9L198.9 233.7L199.1 231.4L199.2 229.2L199.3 227.0L199.4 224.8L199.6 222.6L199.7 220.4L199.8 218.1L200.0 215.9L200.1 213.7L200.3 211.5L200.4 209.3L200.6 207.1L200.7 204.8L200.8 202.6L201.0 200.4L201.2 198.2L201.3 196.1L201.5 193.9L201.6 191.7L201.8 189.5L201.9 187.4L202.1 185.2L202.3 183.1L202.4 181.0L202.6 178.9L202.7 176.8L202.9 174.7L203.1 172.6L203.2 170.5L203.4 168.5L203.6 166.5L203.7 164.4L203.9 162.4L204.1 160.5L204.3 158.5L204.4 156.6L204.6 154.6L204.8 152.7L205.0 150.8L205.1 149.0L205.3 147.1L205.5 145.3L205.7 143.5L205.8 141.7L206.0 140.0M251.0 338.3L251.5 338.1L252.0 337.8L252.5 337.5L253.1 337.1L253.5 336.7L254.0 336.3L254.5 335.8L254.9 335.3L255.3 334.8L255.7 334.2L256.1 333.6L256.5 333.0L256.9 332.3L257.2 331.6L257.6 330.9L257.9 330.1L258.2 329.3L258.5 328.5L258.8 327.6L259.0 326.7L259.3 325.7L259.5 324.8L259.7 323.8L259.9 322.7L260.1 321.7L260.2 320.6L260.4 319.4L260.5 318.3L260.6 317.1L260.7 315.9L260.8 314.6L260.8 313.3L260.9 312.0L260.9 310.7L260.9 309.3L260.9 307.9L260.9 306.5L260.8 305.1L260.8 303.6L260.7 302.1L260.6 300.6L260.5 299.0L260.4 297.4L260.2 295.8L260.1 294.2L259.9 292.6L259.7 290.9L259.5 289.2L259.3 287.5L259.0 285.8L258.8 284.0L258.5 282.3L258.2 280.5L257.9 278.7L257.6 276.8L257.2 275.0L256.9 273.1L256.5 271.3L256.1 269.4L255.7 267.5L255.3 265.5L254.9 263.6L254.5 261.6L254.0 259.7L253.5 257.7L253.1 255.7L252.5 253.7L252.0 251.7L251.5 249.7L251.0 247.7L250.4 245.6L249.8 243.6L249.3 241.5L248.7 239.5L248.0 237.4L247.4 235.3L246.8 233.2L246.1 231.2L245.5 229.1L244.8 227.0L244.1 224.9L243.4 222.8L242.7 220.7L242.0 218.6L241.3 216.5L240.5 214.4L239.8 212.3L239.0 210.2L238.3 208.2L237.5 206.1L236.7 204.0L235.9 201.9L235.1 199.8L234.3 197.8L233.4 195.7M302.0 302.9L302.7 302.0L303.4 301.1L304.1 300.2L304.7 299.3L305.4 298.3L305.9 297.3L306.5 296.3L307.0 295.3L307.5 294.2L308.0 293.1L308.4 292.0L308.8 290.9L309.1 289.7L309.5 288.5L309.8 287.3L310.1 286.1L310.3 284.9L310.5 283.6L310.7 282.3L310.8 281.0L310.9 279.7L311.0 278.4L311.1 277.0L311.1 275.7L311.1 274.3L311.0 272.9L310.9 271.5L310.8 270.0L310.7 268.6L310.5 267.1L310.3 265.6L310.1 264.1L309.8 262.6L309.5 261.1L309.1 259.6L308.8 258.0L308.4 256.4L308.0 254.9L307.5 253.3L307.0 251.7L306.5 250.1L305.9 248.5L305.4 246.9L304.7 245.2L304.1 243.6L303.4 241.9L302.7 240.3L302.0 238.6L301.2 237.0L300.4 235.3L299.6 233.6L298.8 231.9L297.9 230.3L297.0 228.6L296.1 226.9L295.1 225.2L294.1 223.5L293.1 221.8L292.1 220.1L291.0 218.4L289.9 216.7L288.8 215.0L287.7 213.3L286.5 211.6L285.3 209.9L284.1 208.2L282.8 206.6L281.6 204.9L280.3 203.2L279.0 201.5L277.7 199.9L276.3 198.2L274.9 196.5L273.5 194.9L272.1 193.3L270.7 191.6L269.2 190.0L267.8 188.4L266.3 186.8L264.8 185.2L263.2 183.6L261.7 182.0L260.1 180.5L258.5 178.9M332.9 231.0L333.0 229.6L333.1 228.2L333.1 226.9L333.1 225.5L333.0 224.1L332.9 222.7L332.8 221.3L332.6 219.9L332.4 218.5L332.2 217.2L331.9 215.8L331.5 214.4L331.2 213.0L330.8 211.6L330.3 210.2L329.8 208.9L329.3 207.5L328.8 206.1L328.2 204.8L327.6 203.4L326.9 202.0L326.2 200.7L325.4 199.4L324.7 198.0L323.9 196.7L323.0 195.4L322.1 194.0L321.2 192.7L320.2 191.4L319.3 190.1L318.2 188.8L317.2 187.6L316.1 186.3L315.0 185.0L313.8 183.8L312.6 182.5L311.4 181.3L310.1 180.1L308.8 178.9L307.5 177.7L306.2 176.5L304.8 175.4L303.4 174.2L301.9 173.1L300.5 172.0L299.0 170.8L297.4 169.8L295.9 168.7L294.3 167.6L292.7 166.6L291.1 165.5L289.4 164.5L287.7 163.5L286.0 162.5L284.3 161.6L282.5 160.6L280.7 159.7L278.9 158.8L277.1 157.9L275.2 157.0L273.4 156.1L271.5 155.3L269.6 154.5L267.6 153.7L265.7 152.9L263.7 152.2L261.7 151.4L259.7 150.7L257.7 150.0L255.7 149.3L253.6 148.7L251.6 148.0L249.5 147.4L247.4 146.8L245.3 146.3L243.2 145.7L241.0 145.2L238.9 144.7L236.7 144.2L234.6 143.8L232.4 143.3L230.3 142.9L228.1 142.5L225.9 142.2L223.7 141.8L221.5 141.5L219.3 141.2L217.1 141.0L214.9 140.7L212.7 140.5L210.4 140.3L208.2 140.1L206.0 140.0M314.8 152.5L314.1 151.5L313.4 150.5L312.7 149.5L311.9 148.5L311.1 147.5L310.3 146.6L309.4 145.6L308.5 144.7L307.6 143.9L306.7 143.0L305.7 142.2L304.6 141.4L303.6 140.6L302.5 139.8L301.4 139.1L300.3 138.4L299.1 137.7L297.9 137.0L296.7 136.4L295.4 135.8L294.2 135.2L292.9 134.6L291.5 134.1L290.2 133.6L288.8 133.1L287.4 132.7L285.9 132.2L284.5 131.8L283.0 131.5L281.5 131.1L280.0 130.8L278.4 130.5L276.9 130.2L275.3 130.0L273.6 129.8L272.0 129.6L270.4 129.4L268.7 129.3L267.0 129.2L265.3 129.1L263.5 129.0M265.9 106.4L265.2 106.1L264.4 105.8L263.7 105.6L262.9 105.4L262.1 105.2L261.3 105.0L260.5 104.9L259.7 104.8L258.8 104.8L257.9 104.8L257.1 104.8L256.2 104.9L255.3 105.0L254.3 105.1L253.4 105.3L252.4 105.5L251.4 105.7L250.5 106.0L249.5 106.3L248.4 106.6L247.4 107.0L246.4 107.4L245.3 107.8L244.3 108.3L243.2 108.8L242.1 109.3M131.4 322.4L132.8 323.4L134.3 324.4L135.8 325.4L137.3 326.3L138.8 327.3L140.3 328.2L141.9 329.1L143.5 329.9L145.1 330.8L146.7 331.6L148.3 332.4L150.0 333.2L151.6 333.9L153.3 334.7L155.0 335.4L156.7 336.1L158.5 336.7L160.2 337.4L162.0 338.0L163.7 338.6L165.5 339.1L167.3 339.7L169.1 340.2L171.0 340.7L172.8 341.2L174.6 341.6L176.5 342.0L178.4 342.4L180.2 342.8L182.1 343.1L184.0 343.4L185.9 343.7L187.8 344.0L189.7 344.2L191.6 344.4L193.5 344.6L195.4 344.8L197.3 344.9L199.3 345.0L201.2 345.1L203.1 345.1L205.0 345.2L207.0 345.2L208.9 345.1L210.8 345.1L212.7 345.0L214.7 344.9L216.6 344.8L218.5 344.6L220.4 344.4L222.3 344.2L224.2 344.0L226.1 343.7L228.0 343.4L229.9 343.1L231.8 342.8L233.6 342.4L235.5 342.0L237.4 341.6L239.2 341.2L241.0 340.7L242.9 340.2L244.7 339.7L246.5 339.1L248.3 338.6L250.0 338.0L251.8 337.4L253.5 336.7L255.3 336.1L257.0 335.4L258.7 334.7L260.4 333.9L262.0 333.2L263.7 332.4L265.3 331.6L266.9 330.8L268.5 329.9L270.1 329.1L271.7 328.2L273.2 327.3L274.7 326.3L276.2 325.4L277.7 324.4L279.2 323.4L280.6 322.4M78.5 219.9L78.5 221.6L78.6 223.4L78.7 225.1L78.9 226.9L79.1 228.6L79.3 230.3L79.6 232.1L79.9 233.8L80.2 235.5L80.6 237.2L81.1 238.9L81.5 240.7L82.0 242.4L82.6 244.1L83.1 245.7L83.8 247.4L84.4 249.1L85.1 250.7L85.8 252.4L86.6 254.0L87.4 255.7L88.2 257.3L89.1 258.9L90.0 260.5L90.9 262.1L91.9 263.6L92.9 265.2L94.0 266.7L95.0 268.3L96.1 269.8L97.3 271.3L98.5 272.8L99.7 274.2L100.9 275.7L102.2 277.1L103.5 278.5L104.8 279.9L106.2 281.3L107.6 282.6L109.0 284.0L110.5 285.3L112.0 286.6L113.5 287.9L115.1 289.1L116.6 290.4L118.2 291.6L119.9 292.8L121.5 293.9L123.2 295.1L124.9 296.2L126.6 297.3L128.4 298.4L130.2 299.4L132.0 300.5L133.8 301.5L135.6 302.4L137.5 303.4L139.4 304.3L141.3 305.2L143.2 306.1L145.2 306.9L147.1 307.8L149.1 308.5L151.1 309.3L153.1 310.0L155.2 310.8L157.2 311.4L159.3 312.1L161.3 312.7L163.4 313.3L165.5 313.9L167.7 314.4L169.8 314.9L171.9 315.4L174.1 315.9L176.2 316.3L178.4 316.7L180.6 317.1L182.8 317.4L185.0 317.7L187.2 318.0L189.4 318.2L191.6 318.4L193.8 318.6L196.0 318.8L198.2 318.9L200.4 319.0L202.7 319.0L204.9 319.1L207.1 319.1L209.3 319.0L211.6 319.0L213.8 318.9L216.0 318.8L218.2 318.6L220.4 318.4L222.6 318.2L224.8 318.0L227.0 317.7L229.2 317.4L231.4 317.1L233.6 316.7L235.8 316.3L237.9 315.9L240.1 315.4L242.2 314.9L244.3 314.4L246.5 313.9L248.6 313.3L250.7 312.7L252.7 312.1L254.8 311.4L256.8 310.8L258.9 310.0L260.9 309.3L262.9 308.5L264.9 307.8L266.8 306.9L268.8 306.1L270.7 305.2L272.6 304.3L274.5 303.4L276.4 302.4L278.2 301.5L280.0 300.5L281.8 299.4L283.6 298.4L285.4 297.3L287.1 296.2L288.8 295.1L290.5 293.9L292.1 292.8L293.8 291.6L295.4 290.4L296.9 289.1L298.5 287.9L300.0 286.6L301.5 285.3L303.0 284.0L304.4 282.6L305.8 281.3L307.2 279.9L308.5 278.5L309.8 277.1L311.1 275.7L312.3 274.2L313.5 272.8L314.7 271.3L315.9 269.8L317.0 268.3L318.0 266.7L319.1 265.2L320.1 263.6L321.1 262.1L322.0 260.5L322.9 258.9L323.8 257.3L324.6 255.7L325.4 254.0L326.2 252.4L326.9 250.7L327.6 249.1L328.2 247.4L328.9 245.7L329.4 244.1L330.0 242.4L330.5 240.7L330.9 238.9L331.4 237.2L331.8 235.5L332.1 233.8L332.4 232.1L332.7 230.3L332.9 228.6L333.1 226.9L333.3 225.1L333.4 223.4L333.5 221.6L333.5 219.9M130.0 116.6L128.6 117.7L127.2 118.8L125.9 119.8L124.6 120.9L123.3 122.1L122.0 123.2L120.8 124.4L119.6 125.5L118.4 126.7L117.2 127.9L116.1 129.2L115.0 130.4L113.9 131.7L112.9 132.9L111.9 134.2L110.9 135.5L109.9 136.8L109.0 138.1L108.1 139.5L107.2 140.8L106.3 142.2L105.5 143.6L104.7 144.9L104.0 146.3L103.3 147.7L102.6 149.1L101.9 150.6L101.3 152.0L100.7 153.4L100.1 154.9L99.6 156.3L99.1 157.8L98.6 159.3L98.2 160.7L97.8 162.2L97.4 163.7L97.1 165.2L96.8 166.7L96.5 168.2L96.3 169.7L96.1 171.2L95.9 172.7L95.8 174.2L95.7 175.7L95.6 177.2L95.6 178.7L95.6 180.2L95.6 181.8L95.7 183.3L95.8 184.8L95.9 186.3L96.1 187.8L96.3 189.3L96.5 190.8L96.8 192.3L97.1 193.8L97.4 195.3L97.8 196.8L98.2 198.2L98.6 199.7L99.1 201.2L99.6 202.6L100.1 204.1L100.7 205.5L101.3 207.0L101.9 208.4L102.6 209.8L103.3 211.2L104.0 212.6L104.7 214.0L105.5 215.4L106.3 216.8L107.2 218.2L108.1 219.5L109.0 220.8L109.9 222.2L110.9 223.5L111.9 224.8L112.9 226.0L113.9 227.3L115.0 228.6L116.1 229.8L117.2 231.0L118.4 232.2L119.6 233.4L120.8 234.6L122.0 235.8L123.3 236.9L124.6 238.0L125.9 239.1L127.2 240.2L128.6 241.3L130.0 242.3L131.4 243.4L132.8 244.4L134.3 245.4L135.8 246.4L137.3 247.3L138.8 248.2L140.3 249.1L141.9 250.0L143.5 250.9L145.1 251.7L146.7 252.6L148.3 253.4L150.0 254.2L151.6 254.9L153.3 255.6L155.0 256.4L156.7 257.0L158.5 257.7L160.2 258.3L162.0 259.0L163.7 259.5L165.5 260.1L167.3 260.7L169.1 261.2L171.0 261.7L172.8 262.1L174.6 262.6L176.5 263.0L178.4 263.4L180.2 263.7L182.1 264.1L184.0 264.4L185.9 264.7L187.8 265.0L189.7 265.2L191.6 265.4L193.5 265.6L195.4 265.7L197.3 265.9L199.3 266.0L201.2 266.1L203.1 266.1L205.0 266.1L207.0 266.1L208.9 266.1L210.8 266.1L212.7 266.0L214.7 265.9L216.6 265.7L218.5 265.6L220.4 265.4L222.3 265.2L224.2 265.0L226.1 264.7L228.0 264.4L229.9 264.1L231.8 263.7L233.6 263.4L235.5 263.0L237.4 262.6L239.2 262.1L241.0 261.7L242.9 261.2L244.7 260.7L246.5 260.1L248.3 259.5L250.0 259.0L251.8 258.3L253.5 257.7L255.3 257.0L257.0 256.4L258.7 255.6L260.4 254.9L262.0 254.2L263.7 253.4L265.3 252.6L266.9 251.7L268.5 250.9L270.1 250.0L271.7 249.1L273.2 248.2L274.7 247.3L276.2 246.4L277.7 245.4L279.2 244.4L280.6 243.4L282.0 242.3L283.4 241.3L284.8 240.2L286.1 239.1L287.4 238.0L288.7 236.9L290.0 235.8L291.2 234.6L292.4 233.4L293.6 232.2L294.8 231.0L295.9 229.8L297.0 228.6L298.1 227.3L299.1 226.0L300.1 224.8L301.1 223.5L302.1 222.2L303.0 220.8L303.9 219.5L304.8 218.2L305.7 216.8L306.5 215.4L307.3 214.0L308.0 212.6L308.7 211.2L309.4 209.8L310.1 208.4L310.7 207.0L311.3 205.5L311.9 204.1L312.4 202.6L312.9 201.2L313.4 199.7L313.8 198.2L314.2 196.8L314.6 195.3L314.9 193.8L315.2 192.3L315.5 190.8L315.7 189.3L315.9 187.8L316.1 186.3L316.2 184.8L316.3 183.3L316.4 181.8L316.4 180.2L316.4 178.7L316.4 177.2L316.3 175.7L316.2 174.2L316.1 172.7L315.9 171.2L315.7 169.7L315.5 168.2L315.2 166.7L314.9 165.2L314.6 163.7L314.2 162.2L313.8 160.7L313.4 159.3L312.9 157.8L312.4 156.3L311.9 154.9L311.3 153.4L310.7 152.0L310.1 150.6L309.4 149.1L308.7 147.7L308.0 146.3L307.3 144.9L306.5 143.6L305.7 142.2L304.8 140.8L303.9 139.5L303.0 138.1L302.1 136.8L301.1 135.5L300.1 134.2L299.1 132.9L298.1 131.7L297.0 130.4L295.9 129.2L294.8 127.9L293.6 126.7L292.4 125.5L291.2 124.4L290.0 123.2L288.7 122.1L287.4 120.9L286.1 119.8L284.8 118.8L283.4 117.7L282.0 116.6M211.0 100.7L209.9 100.6L208.8 100.6L207.7 100.6L206.6 100.5L205.4 100.5L204.3 100.6L203.2 100.6L202.1 100.6L201.0 100.7L199.9 100.8L198.8 100.9L197.7 101.0L196.6 101.1L195.5 101.2L194.4 101.4L193.3 101.5L192.2 101.7L191.1 101.9L190.0 102.1L189.0 102.4L187.9 102.6L186.8 102.9L185.8 103.1L184.7 103.4L183.7 103.7L182.6 104.0L181.6 104.3L180.6 104.7L179.6 105.0L178.6 105.4L177.6 105.8L176.6 106.2L175.6 106.6L174.6 107.0L173.6 107.5L172.7 107.9L171.7 108.4L170.8 108.8L169.9 109.3L169.0 109.8L168.1 110.3L167.2 110.9L166.3 111.4L165.5 112.0L164.6 112.5L163.8 113.1L162.9 113.7L162.1 114.3L161.3 114.9L160.5 115.5L159.8 116.1L159.0 116.8L158.3 117.4L157.5 118.1L156.8 118.7L156.1 119.4L155.4 120.1L154.8 120.8L154.1 121.5L153.5 122.2L152.8 123.0L152.2 123.7L151.6 124.4L151.1 125.2L150.5 125.9L150.0 126.7L149.5 127.5L148.9 128.2L148.5 129.0L148.0 129.8L147.5 130.6L147.1 131.4L146.7 132.2L146.3 133.0L145.9 133.9L145.5 134.7L145.2 135.5L144.9 136.4L144.6 137.2L144.3 138.0L144.0 138.9L143.8 139.7L143.5 140.6L143.3 141.4L143.1 142.3L143.0 143.2L142.8 144.0L142.7 144.9L142.5 145.8L142.4 146.6L142.4 147.5L142.3 148.4L142.3 149.3L142.3 150.1L142.3 151.0L142.3 151.9L142.3 152.7L142.4 153.6L142.4 154.5L142.5 155.4L142.7 156.2L142.8 157.1L143.0 158.0L143.1 158.8L143.3 159.7L143.5 160.5L143.8 161.4L144.0 162.2L144.3 163.1L144.6 163.9L144.9 164.8L145.2 165.6L145.5 166.4L145.9 167.3L146.3 168.1L146.7 168.9L147.1 169.7L147.5 170.5L148.0 171.3L148.5 172.1L148.9 172.9L149.5 173.7L150.0 174.4L150.5 175.2L151.1 176.0L151.6 176.7L152.2 177.4L152.8 178.2L153.5 178.9L154.1 179.6L154.8 180.3L155.4 181.0L156.1 181.7L156.8 182.4L157.5 183.1L158.3 183.7L159.0 184.4L159.8 185.0L160.5 185.6L161.3 186.2L162.1 186.9L162.9 187.5L163.8 188.0L164.6 188.6L165.5 189.2L166.3 189.7L167.2 190.3L168.1 190.8L169.0 191.3L169.9 191.8L170.8 192.3L171.7 192.8L172.7 193.2L173.6 193.7L174.6 194.1L175.6 194.5L176.6 194.9L177.6 195.3L178.6 195.7L179.6 196.1L180.6 196.4L181.6 196.8L182.6 197.1L183.7 197.4L184.7 197.7L185.8 198.0L186.8 198.3L187.9 198.5L189.0 198.8L190.0 199.0L191.1 199.2L192.2 199.4L193.3 199.6L194.4 199.8L195.5 199.9L196.6 200.0L197.7 200.2L198.8 200.3L199.9 200.4L201.0 200.4L202.1 200.5L203.2 200.5L204.3 200.6L205.4 200.6L206.6 200.6L207.7 200.6L208.8 200.5L209.9 200.5L211.0 200.4L212.1 200.4L213.2 200.3L214.3 200.2L215.4 200.0L216.5 199.9L217.6 199.8L218.7 199.6L219.8 199.4L220.9 199.2L222.0 199.0L223.0 198.8L224.1 198.5L225.2 198.3L226.2 198.0L227.3 197.7L228.3 197.4L229.4 197.1L230.4 196.8L231.4 196.4L232.4 196.1L233.4 195.7L234.4 195.3L235.4 194.9L236.4 194.5L237.4 194.1L238.4 193.7L239.3 193.2L240.3 192.8L241.2 192.3L242.1 191.8L243.0 191.3L243.9 190.8L244.8 190.3L245.7 189.7L246.5 189.2L247.4 188.6L248.2 188.0L249.1 187.5L249.9 186.9L250.7 186.2L251.5 185.6L252.2 185.0L253.0 184.4L253.7 183.7L254.5 183.1L255.2 182.4L255.9 181.7L256.6 181.0L257.2 180.3L257.9 179.6L258.5 178.9L259.2 178.2L259.8 177.4L260.4 176.7L260.9 176.0L261.5 175.2L262.0 174.4L262.5 173.7L263.1 172.9L263.5 172.1L264.0 171.3L264.5 170.5L264.9 169.7L265.3 168.9L265.7 168.1L266.1 167.3L266.5 166.4L266.8 165.6L267.1 164.8L267.4 163.9L267.7 163.1L268.0 162.2L268.2 161.4L268.5 160.5L268.7 159.7L268.9 158.8L269.0 158.0L269.2 157.1L269.3 156.2L269.5 155.4L269.6 154.5L269.6 153.6L269.7 152.7L269.7 151.9L269.7 151.0L269.7 150.1L269.7 149.3L269.7 148.4L269.6 147.5L269.6 146.6L269.5 145.8L269.3 144.9L269.2 144.0L269.0 143.2L268.9 142.3L268.7 141.4L268.5 140.6L268.2 139.7L268.0 138.9L267.7 138.0L267.4 137.2L267.1 136.4L266.8 135.5L266.5 134.7L266.1 133.9L265.7 133.0L265.3 132.2L264.9 131.4L264.5 130.6L264.0 129.8L263.5 129.0L263.1 128.2L262.5 127.5L262.0 126.7L261.5 125.9L260.9 125.2L260.4 124.4L259.8 123.7L259.2 123.0L258.5 122.2L257.9 121.5L257.2 120.8L256.6 120.1L255.9 119.4L255.2 118.7L254.5 118.1L253.7 117.4L253.0 116.8L252.2 116.1L251.5 115.5L250.7 114.9L249.9 114.3L249.1 113.7L248.2 113.1L247.4 112.5L246.5 112.0L245.7 111.4L244.8 110.9L243.9 110.3L243.0 109.8L242.1 109.3L241.2 108.8L240.3 108.4L239.3 107.9L238.4 107.5L237.4 107.0L236.4 106.6L235.4 106.2L234.4 105.8L233.4 105.4L232.4 105.0L231.4 104.7L230.4 104.3L229.4 104.0L228.3 103.7L227.3 103.4L226.2 103.1L225.2 102.9L224.1 102.6L223.0 102.4L222.0 102.1L220.9 101.9L219.8 101.7L218.7 101.5L217.6 101.4L216.5 101.2L215.4 101.1L214.3 101.0L213.2 100.9L212.1 100.8L211.0 100.7" fill="none" stroke="#fafafa" stroke-width="1.2"/><path d="M210.0 106.8L209.1 106.8L208.2 106.7L207.3 106.7L206.4 106.7L205.6 106.7L204.7 106.7L203.8 106.7L202.9 106.8L202.0 106.8L201.1 106.9L200.3 107.0L199.4 107.0L198.5 107.1L197.6 107.2L196.8 107.4L195.9 107.5L195.0 107.6L194.2 107.8L193.3 108.0L192.4 108.1L191.6 108.3L190.7 108.5L189.9 108.8L189.1 109.0L188.2 109.2L187.4 109.5L186.6 109.7L185.8 110.0L185.0 110.3L184.2 110.6L183.4 110.9L182.6 111.2L181.8 111.5L181.0 111.9L180.3 112.2L179.5 112.6L178.7 112.9L178.0 113.3L177.3 113.7L176.5 114.1L175.8 114.5L175.1 114.9L174.4 115.3L173.7 115.8L173.1 116.2L172.4 116.7L171.7 117.2L171.1 117.6L170.5 118.1L169.8 118.6L169.2 119.1L168.6 119.6L168.0 120.1L167.4 120.6L166.9 121.2L166.3 121.7L165.8 122.3L165.2 122.8L164.7 123.4L164.2 124.0L163.7 124.5L163.2 125.1L162.8 125.7L162.3 126.3L161.9 126.9L161.4 127.5L161.0 128.1L160.6 128.7L160.2 129.4L159.8 130.0L159.5 130.6L159.1 131.3L158.8 131.9L158.5 132.6L158.2 133.2L157.9 133.9L157.6 134.5L157.4 135.2L157.1 135.9L156.9 136.5L156.7 137.2L156.5 137.9L156.3 138.6L156.1 139.2L156.0 139.9L155.8 140.6L155.7 141.3L155.6 142.0L155.5 142.7L155.4 143.4L155.4 144.1L155.3 144.8L155.3 145.5L155.3 146.2L155.3 146.8L155.3 147.5L155.3 148.2L155.4 148.9L155.4 149.6L155.5 150.3L155.6 151.0L155.7 151.7L155.8 152.4L156.0 153.1L156.1 153.8L156.3 154.4L156.5 155.1L156.7 155.8L156.9 156.5L157.1 157.1L157.4 157.8L157.6 158.5L157.9 159.1L158.2 159.8L158.5 160.4L158.8 161.1L159.1 161.7L159.5 162.4L159.8 163.0L160.2 163.6L160.6 164.3L161.0 164.9L161.4 165.5L161.9 166.1L162.3 166.7L162.8 167.3L163.2 167.9L163.7 168.5L164.2 169.0L164.7 169.6L165.2 170.2L165.8 170.7L166.3 171.3L166.9 171.8L167.4 172.3L168.0 172.9L168.6 173.4L169.2 173.9L169.8 174.4L170.5 174.9L171.1 175.4L171.7 175.8L172.4 176.3L173.1 176.8L173.7 177.2L174.4 177.6L175.1 178.1L175.8 178.5L176.5 178.9L177.3 179.3L178.0 179.7L178.7 180.1L179.5 180.4L180.3 180.8L181.0 181.1L181.8 181.5L182.6 181.8L183.4 182.1L184.2 182.4L185.0 182.7L185.8 183.0L186.6 183.3L187.4 183.5L188.2 183.8L189.1 184.0L189.9 184.2L190.7 184.5L191.6 184.7L192.4 184.9L193.3 185.0L194.2 185.2L195.0 185.4L195.9 185.5L196.8 185.6L197.6 185.8L198.5 185.9L199.4 186.0L200.3 186.0L201.1 186.1L202.0 186.2L202.9 186.2L203.8 186.3L204.7 186.3L205.6 186.3L206.4 186.3L207.3 186.3L208.2 186.3L209.1 186.2L210.0 186.2L210.9 186.1L211.7 186.0L212.6 186.0L213.5 185.9L214.4 185.8L215.2 185.6L216.1 185.5L217.0 185.4L217.8 185.2L218.7 185.0L219.6 184.9L220.4 184.7L221.3 184.5L222.1 184.2L222.9 184.0L223.8 183.8L224.6 183.5L225.4 183.3L226.2 183.0L227.0 182.7L227.8 182.4L228.6 182.1L229.4 181.8L230.2 181.5L231.0 181.1L231.7 180.8L232.5 180.4L233.3 180.1L234.0 179.7L234.7 179.3L235.5 178.9L236.2 178.5L236.9 178.1L237.6 177.6L238.3 177.2L238.9 176.8L239.6 176.3L240.3 175.8L240.9 175.4L241.5 174.9L242.2 174.4L242.8 173.9L243.4 173.4L244.0 172.9L244.6 172.3L245.1 171.8L245.7 171.3L246.2 170.7L246.8 170.2L247.3 169.6L247.8 169.0L248.3 168.5L248.8 167.9L249.2 167.3L249.7 166.7L250.1 166.1L250.6 165.5L251.0 164.9L251.4 164.3L251.8 163.6L252.2 163.0L252.5 162.4L252.9 161.7L253.2 161.1L253.5 160.4L253.8 159.8L254.1 159.1L254.4 158.5L254.6 157.8L254.9 157.1L255.1 156.5L255.3 155.8L255.5 155.1L255.7 154.4L255.9 153.8L256.0 153.1L256.2 152.4L256.3 151.7L256.4 151.0L256.5 150.3L256.6 149.6L256.6 148.9L256.7 148.2L256.7 147.5L256.7 146.8L256.7 146.2L256.7 145.5L256.7 144.8L256.6 144.1L256.6 143.4L256.5 142.7L256.4 142.0L256.3 141.3L256.2 140.6L256.0 139.9L255.9 139.2L255.7 138.6L255.5 137.9L255.3 137.2L255.1 136.5L254.9 135.9L254.6 135.2L254.4 134.5L254.1 133.9L253.8 133.2L253.5 132.6L253.2 131.9L252.9 131.3L252.5 130.6L252.2 130.0L251.8 129.4L251.4 128.7L251.0 128.1L250.6 127.5L250.1 126.9L249.7 126.3L249.2 125.7L248.8 125.1L248.3 124.5L247.8 124.0L247.3 123.4L246.8 122.8L246.2 122.3L245.7 121.7L245.1 121.2L244.6 120.6L244.0 120.1L243.4 119.6L242.8 119.1L242.2 118.6L241.5 118.1L240.9 117.6L240.3 117.2L239.6 116.7L238.9 116.2L238.3 115.8L237.6 115.3L236.9 114.9L236.2 114.5L235.5 114.1L234.7 113.7L234.0 113.3L233.3 112.9L232.5 112.6L231.7 112.2L231.0 111.9L230.2 111.5L229.4 111.2L228.6 110.9L227.8 110.6L227.0 110.3L226.2 110.0L225.4 109.7L224.6 109.5L223.8 109.2L222.9 109.0L222.1 108.8L221.3 108.5L220.4 108.3L219.6 108.1L218.7 108.0L217.8 107.8L217.0 107.6L216.1 107.5L215.2 107.4L214.4 107.2L213.5 107.1L212.6 107.0L211.7 107.0L210.9 106.9L210.0 106.8M107.3 138.2L106.3 139.6L105.2 141.0L104.2 142.4L103.2 143.8L102.2 145.2L101.3 146.6L100.4 148.0L99.6 149.5L98.7 151.0L97.9 152.4L97.2 153.9L96.4 155.4L95.7 156.9L95.1 158.4L94.4 160.0L93.8 161.5L93.3 163.0L92.7 164.6L92.3 166.1L91.8 167.7L91.4 169.3L91.0 170.8L90.6 172.4L90.3 174.0L90.0 175.6L89.8 177.2L89.6 178.8L89.4 180.4L89.2 182.0L89.1 183.6L89.1 185.2L89.0 186.8L89.0 188.4L89.1 190.0L89.1 191.6L89.2 193.2L89.4 194.8L89.6 196.4L89.8 198.0L90.0 199.5L90.3 201.1L90.6 202.7L91.0 204.3L91.4 205.9L91.8 207.4L92.3 209.0L92.7 210.6L93.3 212.1L93.8 213.6L94.4 215.2L95.1 216.7L95.7 218.2L96.4 219.7L97.2 221.2L97.9 222.7L98.7 224.2L99.6 225.6L100.4 227.1L101.3 228.5L102.2 230.0L103.2 231.4L104.2 232.8L105.2 234.2L106.3 235.5L107.3 236.9L108.5 238.2L109.6 239.6L110.8 240.9L112.0 242.2L113.2 243.5L114.5 244.7L115.7 246.0L117.0 247.2L118.4 248.4L119.8 249.6L121.1 250.8L122.6 251.9L124.0 253.0L125.5 254.2L127.0 255.2L128.5 256.3L130.0 257.4L131.6 258.4L133.2 259.4L134.8 260.4L136.4 261.4L138.1 262.3L139.7 263.2L141.4 264.1L143.1 265.0L144.9 265.8L146.6 266.7L148.4 267.5L150.2 268.2L152.0 269.0L153.8 269.7L155.6 270.4L157.5 271.1L159.4 271.8L161.2 272.4L163.1 273.0L165.0 273.6L167.0 274.1L168.9 274.6L170.8 275.1L172.8 275.6L174.7 276.0L176.7 276.4L178.7 276.8L180.7 277.2L182.7 277.5L184.7 277.8L186.7 278.1L188.7 278.4L190.7 278.6L192.8 278.8L194.8 278.9L196.8 279.1L198.9 279.2L200.9 279.3L202.9 279.3L205.0 279.4L207.0 279.4L209.1 279.3L211.1 279.3L213.1 279.2L215.2 279.1L217.2 278.9L219.2 278.8L221.3 278.6L223.3 278.4L225.3 278.1L227.3 277.8L229.3 277.5L231.3 277.2L233.3 276.8L235.3 276.4L237.3 276.0L239.2 275.6L241.2 275.1L243.1 274.6L245.0 274.1L247.0 273.6L248.9 273.0L250.8 272.4L252.6 271.8L254.5 271.1L256.4 270.4L258.2 269.7L260.0 269.0L261.8 268.2L263.6 267.5L265.4 266.7L267.1 265.8L268.9 265.0L270.6 264.1L272.3 263.2L273.9 262.3L275.6 261.4L277.2 260.4L278.8 259.4L280.4 258.4L282.0 257.4L283.5 256.3L285.0 255.2L286.5 254.2L288.0 253.0L289.4 251.9L290.9 250.8L292.2 249.6L293.6 248.4L295.0 247.2L296.3 246.0L297.5 244.7L298.8 243.5L300.0 242.2L301.2 240.9L302.4 239.6L303.5 238.2L304.7 236.9L305.7 235.5L306.8 234.2L307.8 232.8L308.8 231.4L309.8 230.0L310.7 228.5L311.6 227.1L312.4 225.6L313.3 224.2L314.1 222.7L314.8 221.2L315.6 219.7L316.3 218.2L316.9 216.7L317.6 215.2L318.2 213.6L318.7 212.1L319.3 210.6L319.7 209.0L320.2 207.4L320.6 205.9L321.0 204.3L321.4 202.7L321.7 201.1L322.0 199.5L322.2 198.0L322.4 196.4L322.6 194.8L322.8 193.2L322.9 191.6L322.9 190.0L323.0 188.4L323.0 186.8L322.9 185.2L322.9 183.6L322.8 182.0L322.6 180.4L322.4 178.8L322.2 177.2L322.0 175.6L321.7 174.0L321.4 172.4L321.0 170.8L320.6 169.3L320.2 167.7L319.7 166.1L319.3 164.6L318.7 163.0L318.2 161.5L317.6 160.0L316.9 158.4L316.3 156.9L315.6 155.4L314.8 153.9L314.1 152.4L313.3 151.0L312.4 149.5L311.6 148.0L310.7 146.6L309.8 145.2L308.8 143.8L307.8 142.4L306.8 141.0L305.7 139.6L304.7 138.2M108.5 301.1L109.6 302.4L110.8 303.7L112.0 305.0L113.2 306.3L114.5 307.6L115.7 308.8L117.0 310.1L118.4 311.3L119.8 312.5L121.1 313.6L122.6 314.8L124.0 315.9L125.5 317.0L127.0 318.1L128.5 319.2L130.0 320.2L131.6 321.3L133.2 322.3L134.8 323.3L136.4 324.2L138.1 325.2L139.7 326.1L141.4 327.0L143.1 327.9L144.9 328.7L146.6 329.5L148.4 330.3L150.2 331.1L152.0 331.9L153.8 332.6L155.6 333.3L157.5 334.0L159.4 334.6L161.2 335.2L163.1 335.8L165.0 336.4L167.0 337.0L168.9 337.5L170.8 338.0L172.8 338.5L174.7 338.9L176.7 339.3L178.7 339.7L180.7 340.1L182.7 340.4L184.7 340.7L186.7 341.0L188.7 341.2L190.7 341.5L192.8 341.6L194.8 341.8L196.8 342.0L198.9 342.1L200.9 342.1L202.9 342.2L205.0 342.2L207.0 342.2L209.1 342.2L211.1 342.1L213.1 342.1L215.2 342.0L217.2 341.8L219.2 341.6L221.3 341.5L223.3 341.2L225.3 341.0L227.3 340.7L229.3 340.4L231.3 340.1L233.3 339.7L235.3 339.3L237.3 338.9L239.2 338.5L241.2 338.0L243.1 337.5L245.0 337.0L247.0 336.4L248.9 335.8L250.8 335.2L252.6 334.6L254.5 334.0L256.4 333.3L258.2 332.6L260.0 331.9L261.8 331.1L263.6 330.3L265.4 329.5L267.1 328.7L268.9 327.9L270.6 327.0L272.3 326.1L273.9 325.2L275.6 324.2L277.2 323.3L278.8 322.3L280.4 321.3L282.0 320.2L283.5 319.2L285.0 318.1L286.5 317.0L288.0 315.9L289.4 314.8L290.9 313.6L292.2 312.5L293.6 311.3L295.0 310.1L296.3 308.8L297.5 307.6L298.8 306.3L300.0 305.0L301.2 303.7L302.4 302.4L303.5 301.1" fill="none" stroke="#f4f4f4" stroke-width="1" stroke-dasharray="1 3"/></g></svg></div><!--/globe-->
</div>
<div id="mapov" style="position:absolute;left:0;top:0;width:904px;height:611px;will-change:transform">
<style>.gl{position:absolute;white-space:nowrap;font-weight:bold;font-size:11.5px;line-height:13px;letter-spacing:.4px}.cl{position:absolute;white-space:nowrap;font-weight:bold;font-size:16px;line-height:17px;color:#3e3e3e;text-shadow:1px 0 0 #eee,-1px 0 0 #eee,0 1px 0 #eee,0 -1px 0 #eee,.7px .7px 0 #eee,-.7px -.7px 0 #eee,.7px -.7px 0 #eee,-.7px .7px 0 #eee}.fl{position:absolute;white-space:nowrap;font-weight:bold;font-size:11.2px;line-height:13px}</style>
<div class="gl" style="left:651px;top:198px;color:#fcfcfc;">150°西</div>
<div class="gl" style="left:702px;top:201px;color:#fcfcfc;">60°北</div>
<div class="gl" style="left:757px;top:207px;color:#ffffff;">150°东</div>
<div class="gl" style="left:621px;top:215px;color:rgba(250,250,250,.8);">30°北</div>
<div class="gl" style="left:598px;top:236px;color:rgba(250,250,250,.8);">120°西</div>
<div class="gl" style="left:696px;top:240px;color:rgba(250,250,250,.9);">90°北</div>
<div class="gl" style="left:568px;top:302px;color:#fcfcfc;">90°西</div>
<div class="gl" style="left:584px;top:382px;color:#fcfcfc;">60°西</div>
<div class="gl" style="left:621px;top:423px;color:#fcfcfc;">30°南</div>
<div class="gl" style="left:632px;top:430px;color:#fcfcfc;">30°西</div>
<div class="gl" style="left:789px;top:406px;color:#ffffff;">60°东</div>
<div class="gl" style="left:738px;top:440px;color:#ffffff;">30°东</div>
<div class="gl" style="left:804px;top:256px;color:#ffffff;">120°东</div>
<div class="gl" style="left:822px;top:336px;color:#ffffff;">90°东</div>
<div class="fl" style="left:679px;top:213px;color:#d6d6d6">对向子午线</div>
<div class="fl" style="left:671px;top:285px;color:#d2d2d2">北极圈</div>
<div class="fl" style="left:664px;top:358px;color:#d6d6d6">本初子午线</div>
<div class="fl" style="left:678px;top:379px;color:#d0d0d0">北回归线</div>
<div class="fl" style="left:678px;top:419px;color:#d0d0d0">赤道</div>
<div class="fl" style="left:679px;top:442px;color:#f6f6f6">南回归线</div>
<div class="cl" style="left:578px;top:221px">Canada</div>
<div class="cl" style="left:709px;top:228px;text-shadow:none;color:#444;font-size:15.3px">Russia</div>
<div class="cl" style="left:537px;top:362px;color:#3c3c3c;font-size:16.8px;letter-spacing:.2px">Brazil</div>
</div>
<div id="nav">
<svg style="left:790px;top:140px" width="70" height="350" viewBox="0 0 70 350">
<defs>
<radialGradient id="wg" cx="0.4" cy="0.35" r="0.7"><stop offset="0" stop-color="#ffffff"/><stop offset="0.6" stop-color="#f6f6f6"/><stop offset="1" stop-color="#dedede"/></radialGradient>
<linearGradient id="rg" x1="1" y1="0" x2="0" y2="1"><stop offset="0" stop-color="#8c8c8c"/><stop offset="0.5" stop-color="#6e6e6e"/><stop offset="1" stop-color="#5e5e5e"/></linearGradient><linearGradient id="bg1" x1="0" y1="0" x2="0" y2="1"><stop offset="0" stop-color="#ffffff"/><stop offset="1" stop-color="#e6e6e6"/></linearGradient>
<pattern id="trk" x="32" y="143" width="11.5" height="11" patternUnits="userSpaceOnUse"><rect width="11.5" height="11" fill="#3b3b3b"/><circle cx="5.75" cy="5.5" r="4.6" fill="#444"/></pattern>
</defs>
<rect x="23" y="50" width="30" height="291" rx="15" fill="#6c6c6c"/>
<circle cx="38.299999999999955" cy="36.30000000000001" r="33.7" fill="url(#rg)"/>
<circle cx="38.299999999999955" cy="36.30000000000001" r="30" fill="none" stroke="rgba(255,255,255,.12)" stroke-width="1.5"/>
<circle cx="38.299999999999955" cy="36.5" r="27.2" fill="url(#wg)"/>
<path d="M38.299999999999955 15.5L46.799999999999955 24.5Q38.299999999999955 21.5 29.799999999999955 24.5Z" fill="#5a5a5a"/>
<path d="M38.299999999999955 60L46.799999999999955 51Q38.299999999999955 54 29.799999999999955 51Z" fill="#5a5a5a"/>
<path d="M16 36.5L25 28Q22 36.5 25 45Z" fill="#5a5a5a"/>
<path d="M60.5 36.5L51.5 28Q54.5 36.5 51.5 45Z" fill="#5a5a5a"/>
<rect x="32.200000000000045" y="140" width="11.8" height="172" fill="url(#trk)"/>
<path d="M27 79Q38.299999999999955 76 49.60000000000002 79V95A11.3 11.3 0 0 1 27 95Z" fill="url(#bg1)"/>
<path d="M38.299999999999955 85.5L32 91.30000000000001H33.799999999999955V96.80000000000001H37V93.5H39.60000000000002V96.80000000000001H42.799999999999955V91.30000000000001H44.799999999999955L42.5 89.19999999999999V86H41.299999999999955V88Z" fill="#505050"/>
<path d="M27 129.5A11.3 11.3 0 0 1 49.60000000000002 129.5V143Q38.299999999999955 140 27 143Z" fill="url(#bg1)"/>
<path d="M33 131.3H43.60000000000002M38.299999999999955 126V136.60000000000002" stroke="#262626" stroke-width="2"/>
<circle cx="38.299999999999955" cy="288.5" r="11" fill="url(#wg)"/>
<path d="M27 313Q38.299999999999955 310 49.60000000000002 313V327A11.3 11.3 0 0 1 27 327Z" fill="url(#bg1)"/>
<path d="M33 325H44" stroke="#505050" stroke-width="1.6"/>
</svg>
<div style="position:absolute;left:0;top:0;width:904px;height:611px;will-change:transform"><div class="gl" style="left:804px;top:256px;color:rgba(255,255,255,.55)">120°东</div><div class="gl" style="left:789px;top:406px;color:#fff">60°东</div><div class="gl" style="left:822px;top:336px;color:rgba(255,255,255,.35)">90°</div></div>
</div>
<div id="maptool">
<div class="a" style="left:465px;top:538px;width:413px;height:38px;background:#eff0f3"></div>
<div class="a" style="left:464px;top:538px;width:1px;height:38px;background:#c4c6c9"></div>
<div class="btn" style="left:466px;width:53px;background:#e6e7ea"></div>
<div class="btn" style="left:527px;width:30px;background:#e6e7ea"></div>
<div class="btn" style="left:565px;width:30px;background:#e6e7ea"></div>
<div class="btn" style="left:603px;width:30px;background:#dcdde0"></div>
<div class="a" style="left:641px;top:545px;width:1px;height:31px;background:#d5d6d8"></div>
<div class="btn" style="left:649px;width:30px;background:#e6e7ea"></div>
<div class="btn" style="left:687px;width:30px;background:#e6e7ea"></div>
<div class="a" style="left:725px;top:545px;width:1px;height:31px;background:#d5d6d8"></div>
<div class="btn" style="left:733px;width:30px;background:#dcdde0"></div>
<div class="btn" style="left:771px;width:30px;background:#e6e7ea"></div>
<div class="btn" style="left:809px;width:30px;background:#e6e7ea"></div>
<div class="btn" style="left:847px;width:30px;background:#e6e7ea"></div>
<svg style="left:476px;top:552px;color:#6b6d70" width="15" height="15" viewBox="0 0 18 18"><use href="#gi" width="18" height="18"/></svg>
<svg style="left:503px;top:558px" width="11" height="6"><path d="M0.5 0.5L5.5 5.3L10.5 0.5" fill="none" stroke="#9a9c9f" stroke-width="1.1"/></svg>
<svg style="left:536px;top:554px" width="12" height="12" viewBox="0 0 12 12"><path d="M0.5 3V0.5H3M5 0.5H7M0.5 5V7M11.5 5V7M5 11.5H7M9 11.5H11.5V9" fill="none" stroke="#6b6d70" stroke-width="1.1"/><rect x="0.5" y="8.5" width="3" height="3" fill="none" stroke="#6b6d70" stroke-width="1"/><path d="M5.5 6.5L10.5 1.5M7.5 1.5H10.5V4.5" fill="none" stroke="#6b6d70" stroke-width="1.1"/></svg>
<svg style="left:574px;top:554px" width="12" height="12" viewBox="0 0 12 12"><path d="M3.5 0.5H11.5V11.5H3.5V8.5M0.5 3.5V0.5" fill="none" stroke="#6b6d70" stroke-width="1.1"/><rect x="0.5" y="8.5" width="3" height="3" fill="none" stroke="#6b6d70" stroke-width="1"/><path d="M9.5 2.5L5.5 6.5M5.5 3.5V6.5H8.5" fill="none" stroke="#6b6d70" stroke-width="1.1"/></svg>
<svg style="left:612px;top:554px" width="12" height="12" viewBox="0 0 12 12"><rect x="0.55" y="0.55" width="10.9" height="10.9" fill="none" stroke="#6b6d70" stroke-width="1.1"/><circle cx="3.8" cy="3.8" r="1.1" fill="#6b6d70"/><path d="M2 10L4.5 7.5L6 9L8.5 6.5L10.5 10Z" fill="#6b6d70"/></svg>
<svg style="left:658px;top:554px" width="12" height="12"><path d="M6 0.5V11.5M0.5 6H11.5" stroke="#6b6d70" stroke-width="1.2"/></svg>
<svg style="left:696px;top:554px" width="12" height="12"><path d="M0.5 6H11.5" stroke="#6b6d70" stroke-width="2"/></svg>
<svg style="left:742px;top:554px" width="12" height="12" viewBox="0 0 12 12"><path d="M6 0.3L8 2.3H4Z M6 11.7L8 9.7H4Z M0.3 6L2.3 4V8Z M11.7 6L9.7 4V8Z" fill="#6b6d70"/><rect x="4.8" y="4.8" width="2.4" height="2.4" fill="none" stroke="#6b6d70" stroke-width="0.9"/></svg>
<svg style="left:780px;top:554px" width="12" height="12" viewBox="0 0 12 12"><path d="M0.5 3V0.5H3M9 0.5H11.5V3M11.5 9V11.5H9M3 11.5H0.5V9" fill="none" stroke="#6b6d70" stroke-width="1.1"/><rect x="3" y="3" width="6" height="6" fill="none" stroke="#6b6d70" stroke-width="1.1"/><path d="M5 0.5H7M5 11.5H7" stroke="#6b6d70" stroke-width="1"/></svg>
<svg style="left:819px;top:554px" width="12" height="12" viewBox="0 0 12 12"><path d="M2.5 2.5L10 6.5L6 7.5L3.5 11Z" fill="#6b6d70"/><circle cx="1.3" cy="1.3" r="0.6" fill="#6b6d70"/></svg>
<svg style="left:856px;top:553px" width="13" height="13" viewBox="0 0 13 13"><rect x="3.5" y="0.5" width="2.5" height="2.5" fill="none" stroke="#6b6d70" stroke-width="0.9"/><rect x="9.5" y="4.5" width="2.5" height="2.5" fill="none" stroke="#6b6d70" stroke-width="0.9"/><rect x="0.5" y="10" width="2.5" height="2.5" fill="none" stroke="#6b6d70" stroke-width="0.9"/><rect x="4.5" y="10" width="2.5" height="2.5" fill="none" stroke="#6b6d70" stroke-width="0.9"/><path d="M6 2L9.5 5M4.5 3L2 10M3 11.2H4.5" stroke="#6b6d70" stroke-width="0.9"/></svg>
</div>

<!-- RIGHT SIDEBAR -->
<div class="a" style="left:878px;top:100px;width:26px;height:476px;background:#eff0f3"></div>
<div id="rsb">
<svg style="left:886px;top:108px" width="12" height="12" viewBox="0 0 12 12"><path d="M0 2.8H12M0 9.2H12" stroke="#232629" stroke-width="1.1"/><circle cx="8" cy="2.8" r="2" fill="#232629"/><circle cx="4" cy="9.2" r="1.7" fill="#eff0f3" stroke="#232629" stroke-width="1.1"/></svg>
<div class="vt" style="top:127px">属性</div>
<svg style="left:886px;top:166px" width="12" height="12" viewBox="0 0 12 12"><path d="M3.5 2.5L0.6 6L3.5 9.5M8.5 2.5L11.4 6L8.5 9.5M7 1L5 11" fill="none" stroke="#232629" stroke-width="1.1"/></svg>
<div class="vt" style="top:185px">元数据</div>
<svg style="left:886px;top:235px" width="12" height="13" viewBox="0 0 12 13"><path d="M4.5 0.8L2.5 3" stroke="#232629" stroke-width="1.1"/><path d="M0.6 6.5L5 2.2L9.5 6.7L5 11.2Z" fill="none" stroke="#232629" stroke-width="1.2"/><path d="M0.8 6.7H9.3L5 11Z" fill="#232629"/><path d="M10.3 8.5Q11.5 10.3 11.5 11Q11.5 12 10.3 12Q9.1 12 9.1 11Q9.1 10.3 10.3 8.5Z" fill="#232629"/></svg>
<div class="vt" style="top:255px">颜色</div>
<svg style="left:885px;top:293px;color:#232629" width="14" height="14" viewBox="0 0 18 18"><use href="#gi" width="18" height="18"/></svg>
<div class="vt" style="top:313px">地图</div>
<svg style="left:886px;top:351px" width="12" height="13" viewBox="0 0 12 13"><path d="M1.6 0.6H7.5L10.9 4V12.4H1.6Z" fill="none" stroke="#232629" stroke-width="1.2"/><path d="M7.2 0.6V4.3H10.9" fill="none" stroke="#232629" stroke-width="1"/><path d="M3.5 6.5H8.5M3.5 8.5H8.5M3.5 10.5H8.5" stroke="#232629" stroke-width="0.9"/><path d="M0 0H3.3L0 3.3Z" fill="#3daee9"/></svg>
<div class="vt" style="top:371px">说明</div>
<svg style="left:886px;top:409px" width="12" height="13" viewBox="0 0 12 13"><rect x="0.6" y="0.6" width="7.5" height="10" fill="none" stroke="#232629" stroke-width="1.1"/><rect x="4" y="4" width="7.5" height="8.5" fill="#232629"/><path d="M2 3H6M2 5.5H3.5M2 8H3.5" stroke="#232629" stroke-width="0.9"/><path d="M6 7L10 9L6 11Z" fill="#eff0f3"/></svg>
<div class="vt" style="top:429px">版本</div>
<svg style="left:886px;top:467px" width="12" height="12" viewBox="0 0 12 12"><path d="M0.7 1H11.3L6 11Z" fill="none" stroke="#232629" stroke-width="1.2" stroke-linejoin="round"/></svg>
<div class="vt" style="top:487px">过滤</div>
<svg style="left:886px;top:526px" width="12" height="12" viewBox="0 0 12 12"><path d="M1 11L1.5 8L8.5 1L11 3.5L4 10.5Z" fill="none" stroke="#232629" stroke-width="1.2" stroke-linejoin="round"/><path d="M7.2 2.3L9.7 4.8L11 3.5L8.5 1Z" fill="#232629"/></svg>
<div class="vt" style="top:545px">工具</div>
</div>

<!-- STATUS -->
<div class="a" style="left:0;top:576px;width:904px;height:1px;background:#d5d6d8"></div>
<div id="status">
<div class="a" style="left:-1px;top:587px;letter-spacing:0.2px">屏幕截图 2024-04-03...g (第 1 项，共 1 项)</div>
<div class="a" style="left:252px;top:587px">没有生...过滤器</div>
<svg style="left:353px;top:590px" width="12" height="11" viewBox="0 0 12 11"><path d="M0.5 2H11.5M4 2V0.5H8V2M2 2.5V10.5H10V2.5M4.5 4.5V8.5M7.5 4.5V8.5" fill="none" stroke="#a6a8ab" stroke-width="1.1"/></svg>
<svg style="left:386px;top:589px" width="13" height="12" viewBox="0 0 13 12"><path d="M0.8 0.8H12.2L6.5 11.2Z" fill="none" stroke="#232629" stroke-width="1.3" stroke-linejoin="round"/></svg>
<div class="a" style="left:450px;top:587px">无处理中的任务</div>
<svg style="left:585px;top:589px" width="13" height="12" viewBox="0 0 13 12"><path d="M0.6 3V0.6H3M10 0.6H12.4V3M12.4 9V11.4H10M3 11.4H0.6V9M5.5 0.6H7.5M5.5 11.4H7.5" fill="none" stroke="#232629" stroke-width="1.2"/><rect x="3.6" y="3.1" width="5.8" height="5.8" fill="none" stroke="#232629" stroke-width="1.2"/></svg>
<svg style="left:614px;top:589px" width="12" height="12" viewBox="0 0 12 12"><path d="M0.6 3V0.6H3M9 0.6H11.4V3M11.4 9V11.4H9M3 11.4H0.6V9" fill="none" stroke="#232629" stroke-width="1.1"/><rect x="2.6" y="2.6" width="6.8" height="6.8" fill="none" stroke="#232629" stroke-width="1.1"/></svg>
<svg style="left:642px;top:589px" width="12" height="12" viewBox="0 0 12 12"><path d="M3.5 0.6H11.4V11.4H3.5V8.5M0.6 3.5V0.6" fill="none" stroke="#232629" stroke-width="1.1"/><rect x="0.6" y="8.4" width="3" height="3" fill="none" stroke="#232629" stroke-width="1"/><path d="M9.5 2.5L5.5 6.5M5.5 3.5V6.5H8.5" fill="none" stroke="#232629" stroke-width="1.1"/></svg>
<div class="a" style="left:662px;top:592px;width:120px;height:6px;border-radius:3px;background:#dcdde0;border:1px solid #cfd0d3"></div>
<div class="a" style="left:662px;top:592px;width:60px;height:6px;border-radius:3px 0 0 3px;background:#9dd3f2;border:1px solid #3daee9"></div>
<div class="a" style="left:711px;top:586px;width:18px;height:18px;border-radius:50%;background:#eff0f2;border:1px solid #9c9ea1"></div>
<svg style="left:790px;top:589px" width="12" height="12" viewBox="0 0 12 12"><path d="M0.6 3V0.6H3M5 0.6H7M0.6 5V7M11.4 5V7M5 11.4H7M9 11.4H11.4V9" fill="none" stroke="#232629" stroke-width="1.1"/><rect x="0.6" y="8.4" width="3" height="3" fill="none" stroke="#232629" stroke-width="1"/><path d="M5.5 6.5L10.5 1.5M7.5 1.5H10.5V4.5" fill="none" stroke="#232629" stroke-width="1.1"/></svg>
<div class="a" style="left:810px;top:579px;width:76px;height:32px;border-radius:3px;background:#eeeff2;border:1px solid #d3d4d6"></div>
<div class="a" style="left:818px;top:589px;color:#a9abae;font-size:12.5px">100%</div>
<svg style="left:869px;top:592px" width="11" height="6"><path d="M0.5 0.5L5.5 5.3L10.5 0.5" fill="none" stroke="#a9abae" stroke-width="1.1"/></svg>
</div>
</body></html>
